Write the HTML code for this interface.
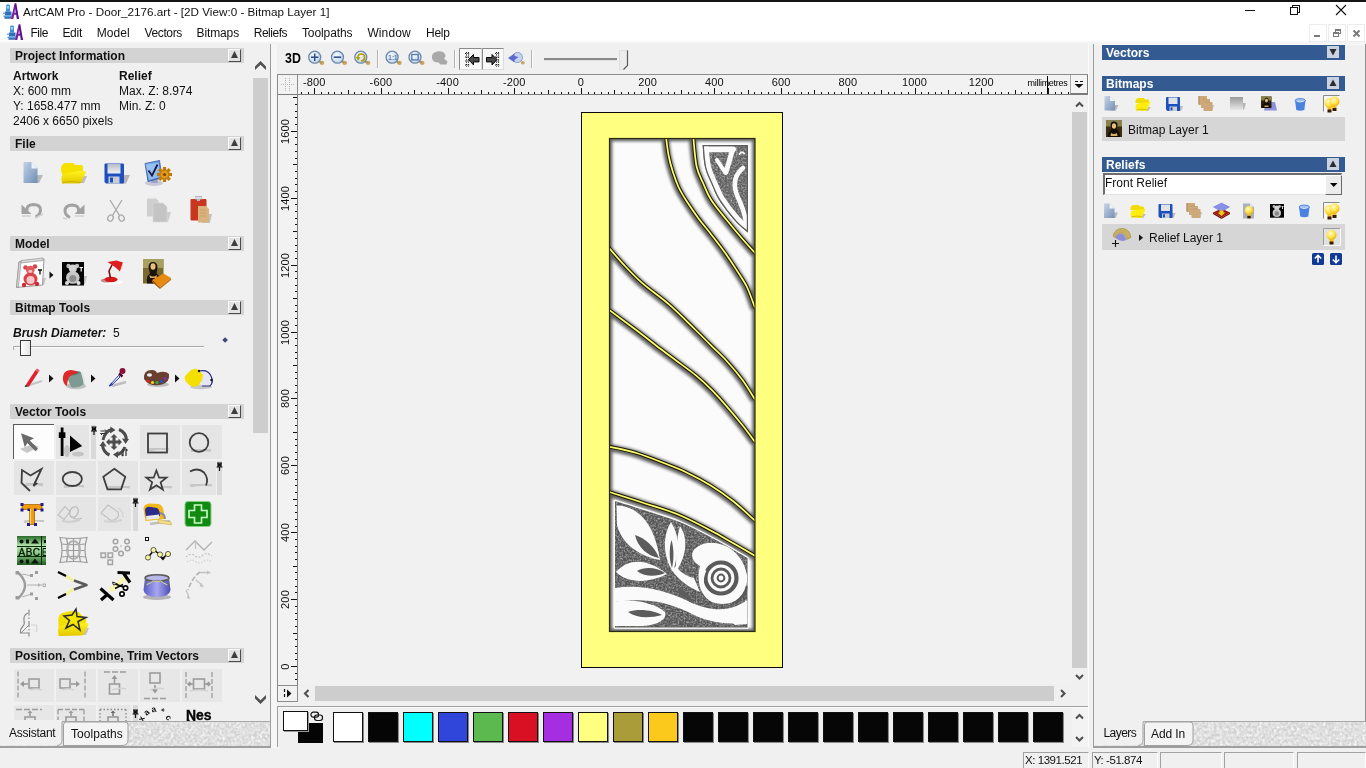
<!DOCTYPE html>
<html>
<head>
<meta charset="utf-8">
<title>ArtCAM Pro</title>
<style>
*{box-sizing:border-box;margin:0;padding:0}
html,body{width:1366px;height:768px;overflow:hidden;background:#f0f0f0}
body{font-family:"Liberation Sans",sans-serif;font-size:12px;color:#000;position:relative}
.abs{position:absolute}
#app{position:absolute;left:0;top:0;width:1366px;height:768px;overflow:hidden;background:#f0f0f0;will-change:transform}
.t{position:absolute;white-space:nowrap;line-height:14px;font-size:12px;color:#111}
.b{font-weight:bold}
#topblack{left:0;top:0;width:1366px;height:2px;background:#151515}
#titlebar{left:0;top:2px;width:1366px;height:20px;background:#fff}
#menubar{left:0;top:22px;width:1366px;height:19px;background:#fff}
#menugrad{left:0;top:41px;width:1366px;height:3px;background:linear-gradient(#fbfbfb,#f0f0f0)}
.mi{position:absolute;top:26px;font-size:12px;line-height:14px;white-space:nowrap;color:#111}
#lp{left:0;top:0;width:270px;height:721px;background:#f0f0f0;overflow:hidden}
.hdr{position:absolute;left:10px;width:234px;height:15px;background:#d3d3d3}
.hdr span{position:absolute;left:5px;top:1px;line-height:15px;font-weight:bold;font-size:12px;white-space:nowrap;color:#111}
.hbtn{position:absolute;left:218px;top:1px;width:13px;height:13px;background:#e2e2e2;border-right:1px solid #4a4a4a;border-bottom:1px solid #4a4a4a;border-left:1px solid #fafafa;border-top:1px solid #fafafa}
.cell{position:absolute;width:40px;height:34px;background:#e5e5e5}
.rh{position:absolute;left:1102px;width:243px;height:15px;background:#335b91}
.rh span{position:absolute;left:4px;top:1px;line-height:15px;font-weight:bold;font-size:12px;color:#fff;white-space:nowrap}
.rbtn{position:absolute;left:225px;top:1px;width:12px;height:12px;background:#c9d2de}
.lrow{position:absolute;left:1102px;width:243px;background:#d6d6d6}
</style>
</head>
<body>
<div id="app">

<div class="abs" id="lp">
<div class="hdr" style="top:48px"><span>Project Information</span><div class="hbtn"><svg class="abs" style="left:0;top:0" width="11" height="11" viewBox="0 0 11 11"><path d="M5.500 1 L9 8 H2z" fill="#3c3c3c"/></svg></div></div>
<div class="hdr" style="top:136px"><span>File</span><div class="hbtn"><svg class="abs" style="left:0;top:0" width="11" height="11" viewBox="0 0 11 11"><path d="M5.500 1 L9 8 H2z" fill="#3c3c3c"/></svg></div></div>
<div class="hdr" style="top:236px"><span>Model</span><div class="hbtn"><svg class="abs" style="left:0;top:0" width="11" height="11" viewBox="0 0 11 11"><path d="M5.500 1 L9 8 H2z" fill="#3c3c3c"/></svg></div></div>
<div class="hdr" style="top:300px"><span>Bitmap Tools</span><div class="hbtn"><svg class="abs" style="left:0;top:0" width="11" height="11" viewBox="0 0 11 11"><path d="M5.500 1 L9 8 H2z" fill="#3c3c3c"/></svg></div></div>
<div class="hdr" style="top:404px"><span>Vector Tools</span><div class="hbtn"><svg class="abs" style="left:0;top:0" width="11" height="11" viewBox="0 0 11 11"><path d="M5.500 1 L9 8 H2z" fill="#3c3c3c"/></svg></div></div>
<div class="hdr" style="top:648px"><span>Position, Combine, Trim Vectors</span><div class="hbtn"><svg class="abs" style="left:0;top:0" width="11" height="11" viewBox="0 0 11 11"><path d="M5.500 1 L9 8 H2z" fill="#3c3c3c"/></svg></div></div>
<div class="t b" style="left:13px;top:69px;">Artwork</div>
<div class="t b" style="left:119px;top:69px;">Relief</div>
<div class="t " style="left:13px;top:84px;">X: 600 mm</div>
<div class="t " style="left:119px;top:84px;">Max. Z: 8.974</div>
<div class="t " style="left:13px;top:99px;">Y: 1658.477 mm</div>
<div class="t " style="left:119px;top:99px;">Min. Z: 0</div>
<div class="t " style="left:13px;top:114px;">2406 x 6650 pixels</div>
<div class="t b" style="left:13px;top:326px;font-style:italic">Brush Diameter:</div>
<div class="t " style="left:113px;top:326px;">5</div>
<div class="abs" style="left:14px;top:346px;width:190px;height:1px;background:#a8a8a8"></div>
<div class="abs" style="left:14px;top:347px;width:190px;height:1px;background:#fdfdfd"></div>
<div class="abs" style="left:13px;top:346px;width:1px;height:4px;background:#b4b4b4"></div>
<div class="abs" style="left:20px;top:340px;width:10.500px;height:16px;background:linear-gradient(90deg,#fff,#e6e6e6);border:1px solid #3a3a3a"></div>
<div class="abs" style="left:222.500px;top:337.500px;width:4.200px;height:4.200px;background:#3d4d70;transform:rotate(45deg)"></div>
<div class="abs" style="left:13px;top:424px;width:41px;height:35px;background:#fdfdfd;border-left:1px solid #5a5a5a;border-top:1px solid #5a5a5a"></div>
<div class="cell" style="left:56px;top:425px;width:33px;height:34px;background:#e5e5e5"></div>
<div class="cell" style="left:91px;top:425px;width:5px;height:34px;background:#d9d9d9"></div>
<div class="cell" style="left:140px;top:425px;width:40px;height:34px;background:#e5e5e5"></div>
<div class="cell" style="left:182px;top:425px;width:40px;height:34px;background:#e5e5e5"></div>
<div class="cell" style="left:14px;top:461px;width:40px;height:34px;background:#e5e5e5"></div>
<div class="cell" style="left:56px;top:461px;width:40px;height:34px;background:#e5e5e5"></div>
<div class="cell" style="left:98px;top:461px;width:40px;height:34px;background:#e5e5e5"></div>
<div class="cell" style="left:140px;top:461px;width:40px;height:34px;background:#e5e5e5"></div>
<div class="cell" style="left:182px;top:461px;width:34px;height:34px;background:#e5e5e5"></div>
<div class="cell" style="left:217px;top:461px;width:5px;height:34px;background:#d9d9d9"></div>
<div class="cell" style="left:56px;top:497px;width:40px;height:34px;background:#e5e5e5"></div>
<div class="cell" style="left:98px;top:497px;width:33px;height:34px;background:#e5e5e5"></div>
<div class="cell" style="left:133px;top:497px;width:5px;height:34px;background:#d9d9d9"></div>
<div class="cell" style="left:14px;top:669px;width:40px;height:33px;background:#e7e7e7"></div>
<div class="cell" style="left:56px;top:669px;width:40px;height:33px;background:#e7e7e7"></div>
<div class="cell" style="left:98px;top:669px;width:40px;height:33px;background:#e7e7e7"></div>
<div class="cell" style="left:140px;top:669px;width:40px;height:33px;background:#e7e7e7"></div>
<div class="cell" style="left:182px;top:669px;width:40px;height:33px;background:#e7e7e7"></div>
<div class="cell" style="left:14px;top:705px;width:40px;height:20px;background:#e7e7e7"></div>
<div class="cell" style="left:56px;top:705px;width:40px;height:20px;background:#e7e7e7"></div>
<div class="cell" style="left:98px;top:705px;width:33px;height:20px;background:#e7e7e7"></div>
<div class="cell" style="left:133px;top:705px;width:5px;height:20px;background:#d9d9d9"></div>
<div class="abs" style="left:253px;top:78px;width:15px;height:355px;background:#cdcdcd"></div>
<svg class="abs" style="left:253px;top:58px" width="15" height="15" viewBox="253 58 15 15"><path d="M260.500 61 L266 66.500 V70 L260.500 64.800 L255 70 V66.500Z" fill="#505050"/></svg>
<svg class="abs" style="left:253px;top:692px" width="15" height="15" viewBox="253 692 15 15"><path d="M260.500 704 L266 698.500 V695 L260.500 700.200 L255 695 V698.500Z" fill="#505050"/></svg>
<div class="abs" style="left:0;top:43px;width:270px;height:1px;background:#fafafa"></div>
<svg class="abs" style="left:0;top:0" width="270" height="721" viewBox="0 0 270 721"><defs><linearGradient id="gabc" x1="0" y1="0" x2="0" y2="1"><stop offset="0" stop-color="#2a6a2a"/><stop offset=".35" stop-color="#b8e8b0"/><stop offset=".65" stop-color="#7fc07a"/><stop offset="1" stop-color="#1f5a1f"/></linearGradient>
<linearGradient id="gcup" x1="0" y1="0" x2="1" y2="0"><stop offset="0" stop-color="#5a5ac8"/><stop offset=".5" stop-color="#a8a8f0"/><stop offset="1" stop-color="#4a4ab8"/></linearGradient></defs><defs>
<linearGradient id="gdoc" x1="0" y1="0" x2="1" y2="1"><stop offset="0" stop-color="#c4d2e6"/><stop offset="1" stop-color="#6f8db5"/></linearGradient>
<linearGradient id="gfold" x1="0" y1="0" x2="0" y2="1"><stop offset="0" stop-color="#fff21a"/><stop offset="1" stop-color="#e3c800"/></linearGradient>
<linearGradient id="gmon" x1="0" y1="0" x2="1" y2="1"><stop offset="0" stop-color="#8fc0f5"/><stop offset="1" stop-color="#3060c8"/></linearGradient>
<linearGradient id="gmetal" x1="0" y1="0" x2="0" y2="1"><stop offset="0" stop-color="#b8bcc4"/><stop offset="1" stop-color="#f0f2f5"/></linearGradient>
<filter id="blur1"><feGaussianBlur stdDeviation="0.6"/></filter>
<filter id="blur2"><feGaussianBlur stdDeviation="1.2"/></filter>
</defs>


<path d="M37 175 h6 l-4 8 h-8z" fill="#b9b9b9" filter="url(#blur1)"/>
<path d="M23.500 162 h8 l6 6.500 v14.500 h-14z" fill="url(#gdoc)"/>
<path d="M31.500 162 v6.500 h6z" fill="#eef3fa"/>

<path d="M80 176 h7 l-3 7 h-10z" fill="#bdbdbd" filter="url(#blur1)"/>
<path d="M61 171 q-1-6 4-8 h8 l2.500 2 h6 q1.500 0 1.500 2 v4 h-4 l-16 5z" fill="#f5e100"/>
<path d="M62 183.500 q-1.500-8 1-9 q10-4 22-3.500 q1.500 0.500 .5 2 l-4.500 9.500 q-.5 1-2 1z" fill="url(#gfold)"/>
<path d="M62.500 183 q6-2.500 18.500-.5" stroke="#c9ae00" stroke-width="1" fill="none"/>

<path d="M122 175 h8 l-4 8.500 h-6z" fill="#b5b5b5" filter="url(#blur1)"/>
<path d="M104.500 164.500 q0-1 1-1 h17.500 q1 0 1 1 v18 q0 1-1 1 h-17 l-1.500-1.500z" fill="#1d50be"/>
<rect x="107.500" y="164" width="13" height="9.500" fill="url(#gmetal)"/>
<rect x="108.500" y="176.500" width="11" height="7" fill="#c9ced6"/>
<rect x="110" y="177.500" width="3" height="5" fill="#1d50be"/>

<ellipse cx="154" cy="183" rx="9" ry="3" fill="#c8c8d8"/>
<path d="M152 178 h5 l1 5 h-7z" fill="#9aa4c8"/>
<path d="M145 163.500 l14.500-3 l2.500 17.500 l-14 3.500z" fill="url(#gmon)" stroke="#3b5aa8" stroke-width=".8"/>
<path d="M146.500 165 l12-2.500 l2 14.500 l-11.500 3z" fill="#a8d0f8" opacity=".7"/>
<path d="M148.500 170.500 l3.500 5 l5.500-11" stroke="#1a1a40" stroke-width="1.700" fill="none"/>
<g transform="translate(164.500,174.500)">
<circle r="5.200" fill="#d08a10"/>
<g fill="#c07a08"><rect x="-1.600" y="-7.500" width="3.200" height="15"/><rect x="-7.500" y="-1.600" width="15" height="3.200"/><rect x="-1.600" y="-7.500" width="3.200" height="15" transform="rotate(45)"/><rect x="-1.600" y="-7.500" width="3.200" height="15" transform="rotate(-45)"/></g>
<circle r="3.800" fill="#e09a18"/><circle r="1.600" fill="#7a4a00"/>
</g>


<g fill="none" stroke="#a2a2a2" stroke-width="3" stroke-linecap="butt">
<path d="M27 211 q-1-6 6-6.500 q8 0 7.500 6 q-.5 4.500-5 6.500"/>
<path d="M70 217.500 q-5-2.500-5-6.500 q0-6 7.500-6 q7 .5 6 6.500"/>
</g>
<path d="M21.500 204.500 v9.500 h10z" fill="#a2a2a2"/>
<path d="M84.500 204.500 v9.500 h-10z" fill="#a2a2a2"/>
<path d="M22 216 h9 M35 218 l8-4 M75 216 h9 M63 218 l4 1" stroke="#cfcfcf" stroke-width="1.500"/>

<g fill="none" stroke="#a8a8a8" stroke-width="1.300">
<path d="M110 200 l9.500 15.500 M122 200 l-9.500 15.500"/>
<ellipse cx="110.500" cy="218" rx="2.600" ry="3.200" transform="rotate(30 110.500 218)"/>
<ellipse cx="121.500" cy="218" rx="2.600" ry="3.200" transform="rotate(-30 121.500 218)"/>
</g>

<path d="M165 212 h6 l-3 10 h-8z" fill="#cdcdcd" filter="url(#blur1)"/>
<path d="M147 198.500 h9 l3 3 v15 h-12z" fill="#cfcfcf"/>
<path d="M153 203 h10 l4 4 v15 h-14z" fill="#c4c4c4" stroke="#dadada" stroke-width=".6"/>

<path d="M206 214 h6 l-2 9 h-8z" fill="#c2c2c2" filter="url(#blur1)"/>
<rect x="190.500" y="199" width="16" height="21.500" rx="1" fill="#c8361f"/>
<path d="M195 196 h7 v3.500 h-2 v1.500 h-3 v-1.500 h-2z" fill="#b4b8c0"/>
<rect x="195.500" y="197" width="6" height="2" fill="#d8dce4"/>
<path d="M198 206 h8 l3 3 v13.500 h-11z" fill="#d9b27e"/>
<path d="M200 210 h6 M200 213 h6 M200 216 h6" stroke="#c09a62" stroke-width=".8"/>


<path d="M39 278 h7 l-2 7 h-8z" fill="#c8c8c8" filter="url(#blur1)"/>
<path d="M19 262 l25-3 l-1.500 26 l-26 2.500z" fill="#fff" stroke="#9a9a9a" stroke-width="1"/>
<path d="M21 260.500 l22-2.500 l.3 2.500 l-22 2.500z" fill="#d8d8d8" stroke="#8a8a8a" stroke-width=".6"/>
<path d="M16.500 287 l2.500-25 l2 .2 l-2.500 25z" fill="#d8d8d8" stroke="#8a8a8a" stroke-width=".6"/>
<circle cx="25.500" cy="267.500" r="2.300" fill="#d8444a"/><circle cx="35" cy="266.500" r="2.300" fill="#d8444a"/>
<circle cx="30.300" cy="270" r="4.300" fill="#e05a5e"/>
<ellipse cx="30.500" cy="279" rx="7" ry="6.500" fill="#d8444a"/>
<ellipse cx="30.500" cy="280" rx="4" ry="4" fill="#f8c8c8"/>
<ellipse cx="30.300" cy="271.500" rx="2" ry="1.400" fill="#f8c8c8"/>
<circle cx="24" cy="285" r="2.200" fill="#c83038"/><circle cx="37" cy="284" r="2.200" fill="#c83038"/>
<path d="M38 270 h4 M40 270 v4.500" stroke="#111" stroke-width="1.300"/>
<path d="M49.500 271.500 v7 l4-3.500z" fill="#111"/>

<path d="M82 276 h5 l-2 8 h-5z" fill="#c0c0c0" filter="url(#blur1)"/>
<rect x="62" y="262" width="22" height="23.500" fill="#050505"/>
<circle cx="68.500" cy="266" r="2.200" fill="#bdbdbd"/><circle cx="77" cy="266" r="2.200" fill="#bdbdbd"/>
<circle cx="72.800" cy="268.500" r="4" fill="#d2d2d2"/>
<ellipse cx="72.800" cy="277.500" rx="6.800" ry="6.300" fill="#c8c8c8"/>
<ellipse cx="72.800" cy="278.500" rx="3.600" ry="3.600" fill="#8c8c8c"/>
<circle cx="67" cy="283" r="2" fill="#e0e0e0"/><circle cx="78.500" cy="283" r="2" fill="#e0e0e0"/>
<path d="M79.500 267.500 h3.500 M81.200 267.500 v4" stroke="#fff" stroke-width="1.200"/>

<ellipse cx="112" cy="282" rx="11" ry="2.600" fill="#fff" opacity=".9" filter="url(#blur1)"/>
<ellipse cx="106" cy="280.500" rx="5" ry="2" fill="#8a2020" opacity=".5" filter="url(#blur1)"/>
<ellipse cx="111" cy="279.500" rx="6.500" ry="2.800" fill="#d81818"/>
<path d="M110.500 278 l-1.500-7 l3-6" stroke="#7a1010" stroke-width="1.600" fill="none"/>
<path d="M107.500 262 l9-1.500 l6.500 2 l-3 9 q-5-5-12.500-9.500z" fill="#e01c1c"/>
<path d="M120 271.500 l3-9 q1.500 5.500-3 9z" fill="#f8e0d0"/>

<rect x="143" y="259" width="20.500" height="24.500" fill="#7a6a30"/>
<rect x="143" y="259" width="20.500" height="9" fill="#a8a060"/>
<path d="M147 283.500 q-1-8 3-10 l-1.500-6 q0-5.500 4.500-5.500 q4.500 0 4.500 5.500 l-1 6 q4 2 4 10z" fill="#1c1408"/>
<ellipse cx="153" cy="266.500" rx="2.500" ry="3.300" fill="#e8c080"/>
<path d="M149.500 275 q3.500 3 7.500 0 l-.5 3 h-6.500z" fill="#d8a868"/>
<path d="M152 280 l11.500-6.500 l7.500 4.500 l-11 9z" fill="#e88a10"/>
<path d="M152 280 l8 7 v2 l-8-7z" fill="#a85a08"/>
<path d="M160 287 l11-9 v2 l-11 9z" fill="#c87010"/>


<path d="M25 386.500 l17-5.500" stroke="#c4c4c4" stroke-width="2.200" filter="url(#blur1)"/>
<path d="M26 384.500 l9.500-14.500 l3 2 l-9.500 14.500z" fill="#e0202c"/>
<path d="M35.500 370 l1.500-1.500 l2.500 1.800 l-.5 1.700z" fill="#f05060"/>
<path d="M26 384.500 l-1.500 2.500 l4.500-.5z" fill="#503020"/>
<path d="M49 374.500 v8 l4.500-4z" fill="#111"/>

<ellipse cx="76" cy="386" rx="10" ry="3.200" fill="#c0c0c0" filter="url(#blur1)"/>
<path d="M66 375 l15-3 l3 12 q-7 5-13 3z" fill="#7f9a92"/>
<path d="M66 375 q7-6 15-3 q-6 5-15 3z" fill="#5a7a74"/>
<path d="M63 380 q-1-9 7-10 q6 0 8 3 q-6 1-9 4 q-2 4-2 9 q-3-1-4-6z" fill="#e02828"/>
<path d="M81 372 q4 4 3 12" stroke="#d8e4e0" stroke-width="1" fill="none"/>
<path d="M91 374.500 v8 l4.500-4z" fill="#111"/>

<path d="M112 386 l14-4" stroke="#bdbdbd" stroke-width="2.400" filter="url(#blur1)"/>
<circle cx="122.500" cy="371" r="3" fill="#8a1038"/>
<path d="M119 373.500 l3.500 3" stroke="#50082a" stroke-width="2.400"/>
<path d="M118.500 375.500 l-7.500 8.500 l-1.500 2 l2.500-1 l8-8z" fill="#dfe6ff" stroke="#2030a0" stroke-width=".9"/>
<path d="M112 383 l-2.500 3" stroke="#2030c0" stroke-width="1.400"/>

<ellipse cx="158" cy="384.500" rx="11" ry="2.500" fill="#bdbdbd" filter="url(#blur1)"/>
<path d="M144 379 q-1-9 8-9 q4 0 5 3 q8-3 12 1 q1 8-7 10.500 q-12 3-18-5.500z" fill="#6a4030"/>
<ellipse cx="149.500" cy="375" rx="2.600" ry="1.800" fill="#f0f0f0"/>
<circle cx="148" cy="381" r="1.600" fill="#e02020"/><circle cx="152.500" cy="382.500" r="1.600" fill="#f0d020"/><circle cx="157" cy="382.500" r="1.600" fill="#30b040"/><circle cx="161.500" cy="381.500" r="1.600" fill="#2050e0"/><circle cx="165" cy="378.500" r="1.500" fill="#8030c0"/>
<path d="M175 374.500 v8 l4.500-4z" fill="#111"/>

<ellipse cx="201" cy="387" rx="11" ry="2.200" fill="#c6c6c6" filter="url(#blur1)"/>
<path d="M199 371 q9-2 12 5 q3 6-1 10 h-8" fill="#e6e6f2" stroke="#2a2a80" stroke-width="1.200"/>
<path d="M187 374 l4-4 l5-1.500 l4 3 l3 3.500 l-1 5 l-3 5 l-5 2 l-5-2 l-3.500-4 l-1-4z" fill="#f4e000"/>
<circle cx="199" cy="371" r="1.200" fill="#111"/><circle cx="211.500" cy="380" r="1.200" fill="#111"/>


<path d="M20 449 l13-5 l6 3 l-12 6z" fill="#c8c8c8" filter="url(#blur1)"/>
<path d="M21 433.300 l13 5 l-4.200 2.300 l8.200 8.200 l-2.400 2.400 l-8.200-8.200 l-2.600 4.300z" fill="#6a6a6a"/>

<ellipse cx="67" cy="451" rx="3" ry="6" fill="#c4c4c4" filter="url(#blur1)"/>
<ellipse cx="78" cy="454" rx="6" ry="2.500" fill="#c4c4c4" filter="url(#blur1)"/>
<rect x="60.700" y="427.500" width="2.800" height="28.500" fill="#050505"/>
<rect x="58.800" y="432.300" width="6.600" height="5.700" fill="#050505"/>
<path d="M70 435.500 V452 L82.200 446z" fill="#050505"/>

<g id="pin"><path d="M91.500 427 h5 M92.500 427.500 v3 M95.500 427.500 v3 M91 431 h6 M94 431 v4" stroke="#111" stroke-width="1.200" fill="none"/><rect x="92.500" y="427.500" width="3" height="3" fill="#111"/></g>

<g stroke="#4c4c4c" fill="none" stroke-width="3">
<path d="M103 440 q2-9 9-10.500"/><path d="M119 429.500 q7 3 7.500 10.500"/><path d="M125 447 q-3 7-9 8"/><path d="M109.500 455 q-6-2.500-7-9.500"/>
</g>
<g fill="#4c4c4c">
<path d="M110.500 426.500 l5 3.500 l-5.500 3.500z"/><path d="M129 439 l-3.500 5 l-3.500-5.500z"/><path d="M118 458 l-5-3.500 l5.500-3.500z"/><path d="M99.500 446 l3.500-5 l3.500 5.500z"/>
<path d="M114 434 l3.500 3.500 h-2 v3 h3 v-2 l3.500 3.500 l-3.500 3.500 v-2 h-3 v3 h2 l-3.500 3.500 l-3.500-3.500 h2 v-3 h-3 v2 l-3.500-3.500 l3.500-3.500 v2 h3 v-3 h-2z"/>
</g>
<path d="M100.500 431 h6 m-1.500-1.500 l1.500 1.500 M106.500 433.500 h-6 m1.500 1.500 l-1.500-1.500" stroke="#333" stroke-width="1" fill="none"/>
<path d="M123 449 v7 m-1.500-1.500 l1.500 1.500 M126 456 v-7 m1.500 1.500 l-1.500-1.500" stroke="#333" stroke-width="1.200" fill="none"/>

<path d="M149 450 q9-3 20-1" stroke="#c6c6c6" stroke-width="3" fill="none" filter="url(#blur1)"/>
<rect x="148" y="433.500" width="19" height="19" fill="none" stroke="#3e3e3e" stroke-width="1.800"/>

<path d="M191 451.500 q9-3 20-1" stroke="#c6c6c6" stroke-width="3" fill="none" filter="url(#blur1)"/>
<circle cx="199" cy="442.500" r="9.300" fill="none" stroke="#3e3e3e" stroke-width="1.800"/>


<path d="M23 486 q9-4 20-1" stroke="#c6c6c6" stroke-width="3" fill="none" filter="url(#blur1)"/>
<path d="M30 491 l-8.500-8 l.5-13 l8.500 5.500 l11-6.500 l-8 17" fill="none" stroke="#3e3e3e" stroke-width="1.800"/>
<path d="M33.500 487 l1-5.500 l3.500 2z" fill="#3e3e3e"/>

<path d="M64 487 q9-3 20-1" stroke="#c6c6c6" stroke-width="3" fill="none" filter="url(#blur1)"/>
<ellipse cx="72.300" cy="479" rx="9.600" ry="7" fill="none" stroke="#3e3e3e" stroke-width="1.800"/>

<path d="M108 488 q9-3 22-1" stroke="#c6c6c6" stroke-width="3" fill="none" filter="url(#blur1)"/>
<path d="M114.300 468.800 l11 8 l-4.200 12.500 h-13.600 l-4.200-12.500z" fill="none" stroke="#3e3e3e" stroke-width="1.800"/>

<path d="M150 488 q9-3 22-1" stroke="#c6c6c6" stroke-width="3" fill="none" filter="url(#blur1)"/>
<path d="M156.400 470.500 l2.700 7.200 h7.400 l-5.900 4.600 l2.300 7.400 l-6.500-4.500 l-6.500 4.500 l2.300-7.400 l-5.900-4.600 h7.400z" fill="none" stroke="#3e3e3e" stroke-width="1.700"/>

<path d="M190 486 q9-3 22-1" stroke="#c6c6c6" stroke-width="3" fill="none" filter="url(#blur1)"/>
<path d="M190 471.500 q8-4.500 14 1 q5 6 2 13" fill="none" stroke="#3e3e3e" stroke-width="1.800"/>
<use href="#pin" x="125.500" y="36"/>


<path d="M24 522 q9-3 20-1" stroke="#c6c6c6" stroke-width="2.500" fill="none" filter="url(#blur1)"/>
<path d="M22 504.500 h20 v5 h-7.500 v15 h-5 v-15 h-7.500z" fill="#f09a10" stroke="#b06a00" stroke-width=".8"/>
<path d="M30.500 509 v15" stroke="#ffd070" stroke-width="1.200"/>
<g fill="#1c1c90"><rect x="20.500" y="503" width="3" height="3"/><rect x="40.500" y="503" width="3" height="3"/><rect x="20.500" y="508.500" width="3" height="3"/><rect x="40.500" y="508.500" width="3" height="3"/><rect x="27" y="523" width="3" height="3"/><rect x="34" y="523" width="3" height="3"/><rect x="27.500" y="508.500" width="2.500" height="2.500"/><rect x="34" y="508.500" width="2.500" height="2.500"/></g>

<g stroke="#bebebe" fill="none" stroke-width="1.100">
<path d="M58 515 l7-8.500 l5 5 l-6 8z"/><ellipse cx="74" cy="512" rx="4" ry="5.500" transform="rotate(25 74 512)" stroke="#b6b6b6"/><path d="M70 516 q6 5 12 2"/><path d="M62 521 q8 2 18-1" stroke="#cfcfcf" stroke-width="2"/>
<path d="M101 513 l7-8 l10 7 q2 6-4 8 q-5 1-6-2z"/><path d="M118 508 q6 4 5 10" stroke="#d2d2d2"/><path d="M104 521 q8 2 18-1" stroke="#d2d2d2" stroke-width="2"/>
</g>
<use href="#pin" x="41.500" y="72"/>

<path d="M150 524 l20-3" stroke="#c0c0c0" stroke-width="2.500" filter="url(#blur1)"/>
<path d="M143.500 509 q0-5 6-5.500 l9 .5 q4 1 5 6 l1 9 l-19 2z" fill="#f0b818"/>
<path d="M145 510 q1-4 6-3 l6 1 q3 2 3 8 l-14 2z" fill="#2c2c88"/>
<path d="M146 516 l13-1.500 l.5 4 l-13 1.500z" fill="#e8e8f0"/>
<path d="M160 513 q5 1 5 6" stroke="#8a8a9a" stroke-width="2" fill="none"/>
<path d="M158 519.500 l13 2.500 l.5 3 l-13-2z" fill="#f4e088" stroke="#b8a040" stroke-width=".5"/>

<rect x="185" y="501.500" width="26" height="25" rx="3" fill="#128a12" stroke="#7fd07f" stroke-width="1"/>
<path d="M194.500 505 h7 v5.500 h5.500 v7 h-5.500 v5.500 h-7 v-5.500 h-5.500 v-7 h5.500z" fill="none" stroke="#c8ffc8" stroke-width="1.600"/>


<rect x="17" y="536" width="29" height="29" fill="#3c8a3c"/>
<rect x="17" y="536" width="29" height="29" fill="url(#gabc)"/>
<path d="M17 546.500 h29 M17 556.500 h29 M41.500 536 v29" stroke="#0a2a0a" stroke-width="1"/>
<g fill="#0a1a0a"><circle cx="21.500" cy="541.500" r="2"/><rect x="26" y="539.500" width="3" height="4"/><path d="M31 543.500 l4-5 l4 5z"/><circle cx="21.500" cy="561.500" r="2"/><rect x="26" y="559.500" width="3" height="4"/><path d="M31 563.500 l4-5 l4 5z"/><path d="M44 540 h2 v3 h-2z"/></g>
<text x="18.500" y="555.500" font-family="Liberation Sans, sans-serif" font-size="10" fill="#06140a" stroke="#06140a" stroke-width=".3" textLength="21.500">ABC</text>
<path d="M43 548.500 v7 M43 548.500 h3 M43 552 h3 M43 555.500 h3" stroke="#0a1a0a" stroke-width="1" fill="none"/>

<g stroke="#9a9a9a" fill="none" stroke-width="1.200">
<path d="M60 537.500 q13 2 27 0 q-4 12 0 25 q-14-2-27 0 q4-13 0-25z"/>
<path d="M61.500 544 q12 1.500 24 0 M62.500 550.500 h22 M61.500 557 q12-1.500 24 0"/>
<path d="M66.500 538 q3 12 0 24 M73.500 538.500 v23.500 M80.500 538 q-3 12 0 24"/>
<ellipse cx="73.500" cy="550" rx="6.500" ry="9" stroke="#b0b0b0" stroke-width="2"/>
</g>

<g stroke="#a4a4a4" fill="none" stroke-width="1.500">
<rect x="101" y="553" width="4.500" height="4.500"/><rect x="108" y="553" width="4.500" height="4.500"/><rect x="108" y="560" width="4.500" height="4.500"/>
<circle cx="115.500" cy="541.500" r="2.300"/><circle cx="127" cy="541.500" r="2.300"/><circle cx="115.500" cy="549" r="2.300"/><circle cx="127.500" cy="548.500" r="2.300"/><circle cx="121" cy="553.500" r="2.300"/>
</g>
<circle cx="121" cy="546" r=".8" fill="#a4a4a4"/>

<rect x="145.500" y="537.500" width="3" height="3" fill="#fff" stroke="#111" stroke-width="1"/>
<path d="M148 557.500 l6-7.500 l5.500 4.500 l3 4 l5-4.500" stroke="#111" stroke-width="1.600" fill="none"/>
<g fill="#f4f49a" stroke="#222" stroke-width=".7"><circle cx="148" cy="557.500" r="2.600"/><circle cx="153.500" cy="550" r="2.600"/><circle cx="160" cy="554.500" r="2.600"/><circle cx="168" cy="554" r="2.600"/></g>
<path d="M160 557 l3 3.500 l2.500-3" fill="#111"/>

<g stroke="#c4c4c4" fill="none" stroke-width="1.200">
<path d="M186 550 l9-9 l9 9 l8-8" stroke="#b2b2b2" stroke-width="1.400"/>
<path d="M195.500 543 v6"/><path d="M186 557 q5-5 9-1 q4 3 8-1 q4-3 9 1" stroke-dasharray="2 1.500"/><path d="M187 562 q5-4 9 0 q4 2 8-1 q4-2 8 1" stroke-dasharray="1.500 1.500" stroke="#d4d4d4"/>
</g>


<g stroke="#9c9c9c" fill="none" stroke-width="2.400"><path d="M18 572.500 q14 13 0 26"/></g>
<g stroke="#b2b2b2" fill="none" stroke-width="1"><path d="M22 574 l8 1.500 M22 597 l8-2.500 M27 585 h15"/></g>
<g fill="#9c9c9c"><rect x="15.500" y="571" width="3.500" height="3.500"/><rect x="15.500" y="596" width="3.500" height="3.500"/><rect x="30" y="574" width="3" height="3"/><rect x="35" y="571" width="3" height="3"/><rect x="30" y="592.500" width="3" height="3"/><rect x="35" y="597" width="3" height="3"/></g>
<rect x="43" y="584" width="2.500" height="2.500" fill="none" stroke="#9c9c9c" stroke-width=".8"/>
<path d="M38 583 l3 2 l-3 2z" fill="#b2b2b2"/>

<path d="M66 576 l8 5 M66 594 l8-5" stroke="#f4f4a8" stroke-width="3.500"/>
<path d="M58 572 l8 4 M58 598 l8-4" stroke="#050505" stroke-width="2.400"/>
<path d="M66 576 l8 5" stroke="#d8d890" stroke-width=".8" stroke-dasharray="1.500 1.500"/>
<path d="M66 594 l8-5" stroke="#d8d890" stroke-width=".8" stroke-dasharray="1.500 1.500"/>
<path d="M74 580.500 l12.500 4.500 l-12.500 4.500" stroke="#5a5a5a" stroke-width="2.600" fill="none" stroke-linejoin="round"/>

<path d="M110 591 l16-14" stroke="#f6f6b0" stroke-width="5"/>
<path d="M117.500 572.500 l12.500 .5 M123 572.500 l7 10" stroke="#050505" stroke-width="3.200" fill="none"/>
<path d="M100.500 588.500 l13 11.500 M101 600 l7.500-6.500" stroke="#050505" stroke-width="3.200" fill="none"/>
<path d="M113 583 l10 4 M115 588.500 l8-4" stroke="#050505" stroke-width="1.400" fill="none"/>
<path d="M112.500 582 l5 2 l-4 1z" fill="#fff" stroke="#050505" stroke-width=".8"/>
<circle cx="125.500" cy="588" r="2.200" fill="#fff" stroke="#050505" stroke-width="1.700"/><circle cx="122" cy="594" r="2.200" fill="#fff" stroke="#050505" stroke-width="1.700"/>

<ellipse cx="157" cy="597" rx="14" ry="3" fill="#b4b4b8" filter="url(#blur1)"/>
<path d="M145 578 q12 5 24 0 l1.500 12 q-1 7-13.500 7 q-12.500 0-13.500-7z" fill="url(#gcup)"/>
<ellipse cx="157" cy="578" rx="12" ry="3.200" fill="#b8b8e8" stroke="#5a5a5a" stroke-width="1.600"/>
<path d="M146 585 q5-2 7-4 q4 1.500 8 0 q2 2.500 7 4" stroke="#d8d89a" stroke-width="1" fill="none"/>
<path d="M146 579 v8 M168 579 v8" stroke="#6a6a6a" stroke-width="1"/>

<g stroke="#c2c2c2" fill="none" stroke-width="1.300">
<path d="M200 572 q-8 6-12 18" stroke="#b4b4b4" stroke-width="1.600" stroke-dasharray="5 2"/>
<path d="M200 572.500 h8 M196 580 l6 5 M186 590 l3 7"/>
</g>
<path d="M207 570.500 l4 2 l-4 2z M201 583 l3 4 l-4.500-.5z M188 595 l2.500 4 l-4-1z" fill="#c2c2c2"/>


<g stroke="#8e8e8e" fill="none" stroke-width="1.200">
<path d="M29 609.500 v27" stroke-dasharray="6 2 1.500 2"/>
<path d="M28 613 q-5 2-4 8 q1 3-1 5 q-3 3-2.500 7 h8.500"/>
<path d="M21 633 l8-8" stroke-width="1"/>
<path d="M31 625 h5 q2 3 0 7" stroke="#d4d4d4"/>
</g>

<path d="M80 628 h9 l-3 7 h-9z" fill="#c2c2c2" filter="url(#blur1)"/>
<path d="M58.500 622 q-1-7 4-9 l8-2 l8 1 l8 8 l-3 9 q-12 3-25 7z" fill="#f4e000"/>
<path d="M59 636 q-2-8 1-10 q12-3 27-3 q2 .5 1 2.500 l-4 8.500 q-1 1.500-3 1.500z" fill="url(#gfold)"/>
<path d="M76 609 l1 7.500 l9 1 l-8 4 l2 8.500 l-7-5.500 l-7 3.500 l3.500-7.500 l-5.500-4.500 l8-1z" fill="#f8e800" stroke="#2a2a2a" stroke-width="1.500" stroke-linejoin="miter"/>

<g stroke="#9c9c9c" fill="none" stroke-width="1.300">
<path d="M18 671.500 v28" stroke-dasharray="5 2"/><rect x="29" y="679" width="10" height="9" stroke-width="1.600"/><path d="M28 684 h-7" stroke-width="1.600"/>
<path d="M51 671.500 v28" stroke-dasharray="5 2" transform="translate(34 0)"/><rect x="60" y="679" width="10" height="9" stroke-width="1.600"/><path d="M71 684 h7" stroke-width="1.600"/>
<path d="M104 672 h22" stroke-dasharray="6 2"/><rect x="109.500" y="684" width="10" height="10" stroke-width="1.600"/><path d="M114.500 683 v-6" stroke-width="1.600"/>
<path d="M144 698.500 h22" stroke-dasharray="6 2"/><rect x="150" y="673" width="10" height="10" stroke-width="1.600"/><path d="M155 685 v6" stroke-width="1.600"/>
<path d="M186 672 v27 M212 672 v27" stroke-dasharray="5 2"/><rect x="193.500" y="679" width="11" height="10" stroke-width="1.600"/><path d="M188 684 h5 M205 684 h5"/>
<path d="M30 690 q6-2 12 0 M62 690 q6-2 12 0 M112 690 q8-3 14-1 M150 690 q8-3 14-1 M190 691 q10-2 18 0" stroke="#d4d4d4" stroke-width="1.600"/>
</g>
<g fill="#989898"><path d="M20 684 l4-3 v6z"/><path d="M80 684 l-4-3 v6z"/><path d="M114.500 675 l-3 4 h6z"/><path d="M155 693.500 l-3-4 h6z"/><path d="M189.500 681.500 l2.500 2.500 l-2.500 2.500 l-2.500-2.500z"/><path d="M208.500 681.500 l2.500 2.500 l-2.500 2.500 l-2.500-2.500z"/></g>

<g stroke="#9c9c9c" fill="none" stroke-width="1.300">
<path d="M16 709.500 h26" stroke-dasharray="6 2"/><rect x="25" y="717" width="10" height="8" stroke-width="1.600"/><path d="M30 716 v-4" stroke-width="1.600"/>
<path d="M58 709.500 h26 M58 709.500 v12 M84 709.500 v12" stroke-dasharray="5 2"/><rect x="66" y="717" width="10" height="8" stroke-width="1.600"/><path d="M71 716 v-4" stroke-width="1.600"/>
<path d="M100 709.500 h26 M100 709.500 v12 M126 709.500 v12" stroke-dasharray="1.500 2" stroke="#8a8a8a"/><rect x="108" y="717" width="10" height="8" stroke-width="1.600" stroke="#9a9a9a"/><path d="M113 716 v-4" stroke-width="1.600" stroke="#7a7a7a"/>
</g>
<path d="M30 710.500 l-2.500 2.500 h5z M71 710.500 l-2.500 2.500 h5z" fill="#9a9a9a"/><path d="M113 710.500 l-2.500 2.500 h5z" fill="#6a6a6a"/>
<use href="#pin" x="41.500" y="283"/>

<g font-family="Liberation Sans, sans-serif" font-size="8.500" font-weight="bold" fill="#111">
<text transform="translate(143 722) rotate(-65)">x</text><text transform="translate(146.500 716) rotate(-40)">a</text><text transform="translate(152 712.500) rotate(-12)">a</text><text transform="translate(160 713.500) rotate(18)">*</text><text transform="translate(165 717.500) rotate(50)">c</text>
</g>
<text x="186" y="719.800" font-family="Liberation Sans, sans-serif" font-size="14" font-weight="bold" fill="#050505" stroke="#050505" stroke-width=".4" textLength="25.500" lengthAdjust="spacingAndGlyphs">Nes</text>
<text x="186" y="729.800" font-family="Liberation Sans, sans-serif" font-size="14" font-weight="bold" fill="#050505" stroke="#050505" stroke-width=".4" textLength="25.500" lengthAdjust="spacingAndGlyphs">Nes</text>
</svg>
</div>
<svg class="abs" style="left:0;top:0" width="1366" height="768" viewBox="0 0 1366 768"><defs><filter id="tx" x="0" y="0" width="100%" height="100%"><feTurbulence type="fractalNoise" baseFrequency="0.350" numOctaves="2" seed="7"/><feColorMatrix type="matrix" values="0 0 0 0 1  0 0 0 0 1  0 0 0 0 1  1.200 1.200 0 0 -0.900"/><feComposite in2="SourceGraphic" operator="in"/></filter></defs>
<rect x="0" y="721" width="270" height="26" fill="#d2d2d2"/><rect x="0" y="721" width="270" height="26" fill="#fff" filter="url(#tx)"/>
<rect x="1094" y="721" width="272" height="26" fill="#d2d2d2"/><rect x="1094" y="721" width="272" height="26" fill="#fff" filter="url(#tx)"/>
<rect x="0" y="721" width="270" height="1" fill="#a8a8a8"/><rect x="1094" y="721" width="272" height="1" fill="#a8a8a8"/>

<path d="M0 720 H62 V740 Q62 745 57 745.500 H0Z" fill="#f0f0f0"/>
<path d="M62 722 V740 Q62 745 57 745.500" fill="none" stroke="#a4a4a4" stroke-width="1"/>
<path d="M63.500 746 V725 Q63.500 722 66.500 722 H125 Q128 722 128 725 V740 Q128 745.500 122 745.500 H63.500Z" fill="#f4f4f4" stroke="#a0a0a0" stroke-width="1"/>
<rect x="0" y="746" width="270" height="2" fill="#9e9e9e"/>

<path d="M1094 720 H1143 V740 Q1143 745 1138 745.500 H1094Z" fill="#f0f0f0"/>
<path d="M1143 722 V740 Q1143 745 1138 745.500" fill="none" stroke="#a4a4a4" stroke-width="1"/>
<path d="M1144.500 746 V725 Q1144.500 722 1147.500 722 H1190 Q1193 722 1193 725 V740 Q1193 745.500 1187 745.500 H1144.500Z" fill="#f4f4f4" stroke="#a0a0a0" stroke-width="1"/>
<rect x="1094" y="746" width="272" height="2" fill="#9e9e9e"/>
</svg>
<div class="t" style="left:9px;top:726px;letter-spacing:-0.250px">Assistant</div>
<div class="t" style="left:71px;top:727px;letter-spacing:0.050px">Toolpaths</div>
<div class="t" style="left:1103.500px;top:726px;letter-spacing:-0.550px">Layers</div>
<div class="t" style="left:1151px;top:727px;letter-spacing:-0.1px">Add In</div>

<div class="abs" style="left:270px;top:44px;width:1px;height:704px;background:#9c9c9c"></div>
<div class="abs" style="left:271px;top:44px;width:6px;height:704px;background:#f6f6f6"></div>
<div class="abs" style="left:276px;top:43px;width:812px;height:1px;background:#a6a6a6"></div>
<div class="abs" style="left:277px;top:44px;width:811px;height:30px;background:#f0f0f0"></div>
<div class="t b" style="left:284.500px;top:49px;font-size:15.500px;line-height:17px;color:#050505;transform:scaleX(.8);transform-origin:0 0">3D</div>
<svg class="abs" style="left:277px;top:44px" width="811" height="30" viewBox="277 44 811 30"><defs><radialGradient id="gz" cx=".4" cy=".35" r=".7"><stop offset="0" stop-color="#f4faff"/><stop offset="1" stop-color="#b9d4ea"/></radialGradient></defs><ellipse cx="322.0" cy="62.900" rx="2.300" ry="2.100" fill="#c9a468"/><path d="M318.9 61 l2.500 2" stroke="#b89050" stroke-width="2.200"/><circle cx="314.7" cy="57.200" r="6" fill="url(#gz)" stroke="#7088a8" stroke-width="1.300"/><path d="M311 57.200 h7.400 M314.700 53.500 v7.400" stroke="#2a4a8a" stroke-width="1.500"/><ellipse cx="344.8" cy="62.900" rx="2.300" ry="2.100" fill="#c9a468"/><path d="M341.7 61 l2.500 2" stroke="#b89050" stroke-width="2.200"/><circle cx="337.5" cy="57.200" r="6" fill="url(#gz)" stroke="#7088a8" stroke-width="1.300"/><path d="M333.800 57.200 h7.400" stroke="#2a4a8a" stroke-width="1.500"/><ellipse cx="368.1" cy="62.900" rx="2.300" ry="2.100" fill="#c9a468"/><path d="M365.0 61 l2.500 2" stroke="#b89050" stroke-width="2.200"/><circle cx="360.8" cy="57.200" r="6" fill="url(#gz)" stroke="#7088a8" stroke-width="1.300"/><path d="M358 58.500 q-.5-4.500 3.500-4.500 q3.500 .5 3 4 q-.5 3-3.500 3" stroke="#b8a000" stroke-width="1.700" fill="none"/><path d="M355.800 57 l2.300 3.800 l2.400-3.500z" fill="#b8a000"/><rect x="377" y="50" width="1" height="18" fill="#b4b4b4"/><rect x="378" y="50" width="1" height="18" fill="#fafafa"/><ellipse cx="399.4" cy="62.900" rx="2.300" ry="2.100" fill="#c9a468"/><path d="M396.3 61 l2.500 2" stroke="#b89050" stroke-width="2.200"/><circle cx="392.1" cy="57.200" r="6" fill="url(#gz)" stroke="#7088a8" stroke-width="1.300"/><text x="388.300" y="59.600" font-family="Liberation Sans, sans-serif" font-size="6.500" font-weight="bold" fill="#5a7aa8">1:1</text><ellipse cx="422.3" cy="62.900" rx="2.300" ry="2.100" fill="#c9a468"/><path d="M419.2 61 l2.500 2" stroke="#b89050" stroke-width="2.200"/><circle cx="415" cy="57.200" r="6" fill="url(#gz)" stroke="#7088a8" stroke-width="1.300"/><rect x="411.800" y="54.500" width="6.400" height="5.400" fill="none" stroke="#5a78a8" stroke-width="1.300"/><path d="M432 58 q-1-5 5-6.500 q7-1 8.500 4 q0 2-1.500 3 l3.500 3 l-1 3 h-6 l-2-2 q-6 0-6.500-4.500z" fill="#a9a9a9"/><rect x="454" y="50" width="1" height="18" fill="#b4b4b4"/><rect x="455" y="50" width="1" height="18" fill="#fafafa"/><rect x="459.500" y="48.500" width="22" height="21" fill="#f8f8f8" stroke="#dcdcdc"/><path d="M459.500 69.500 v-21 h22" stroke="#8a8a8a" fill="none"/><rect x="482.500" y="48.500" width="21" height="21" fill="#f8f8f8" stroke="#dcdcdc"/><path d="M482.500 69.500 v-21 h21" stroke="#8a8a8a" fill="none"/><g stroke="#222" stroke-width="1" stroke-dasharray="1.200 1.200"><path d="M466.500 52 v15 M468.500 52 v15 M465 53.500 h5 M465 57 h5 M465 61 h5 M465 65 h5"/></g><path d="M468.500 59.500 l5-5 v3 h5.500 v4.400 h-5.500 v3z" fill="#4a4a4a" stroke="#050505" stroke-width="1"/><g stroke="#222" stroke-width="1" stroke-dasharray="1.200 1.200"><path d="M496.500 52 v15 M498.500 52 v15 M495 53.500 h5 M495 57 h5 M495 61 h5 M495 65 h5"/></g><path d="M497 59.500 l-5-5 v3 h-5.500 v4.400 h5.500 v3z" fill="#4a4a4a" stroke="#050505" stroke-width="1"/><ellipse cx="522.800" cy="62.800" rx="2" ry="1.800" fill="#c9a468"/><circle cx="517.500" cy="57.500" r="5" fill="#c4d4f0" stroke="#8aa0c8" stroke-width="1"/><path d="M508 58 l6.500-4.500 v2.500 l4 1 l-4 3 v2.500z" fill="#5a6ad0"/><rect x="531" y="50" width="1" height="18" fill="#b4b4b4"/><rect x="532" y="50" width="1" height="18" fill="#fafafa"/><rect x="544" y="58" width="73" height="2" fill="#8a8a8a"/><rect x="544" y="60" width="73" height="1" fill="#e0e0e0"/><path d="M619.500 50.500 h8 v15 l-4 4 h-4z" fill="#ececec" stroke="#dedede" stroke-width="1"/><path d="M627.500 50.500 v15 l-4 4" fill="none" stroke="#5a5a5a" stroke-width="1.200"/></svg><div class="abs" style="left:298px;top:95px;width:773px;height:589px;background:#f1f1f1"></div>
<div class="abs" style="left:277px;top:74px;width:811px;height:21px;background:#f2f2f2;border-top:1px solid #8c8c8c;border-bottom:1px solid #7c7c7c;border-left:1px solid #8c8c8c"></div>
<div class="abs" style="left:277px;top:95px;width:21px;height:590px;background:#f2f2f2;border-left:1px solid #8c8c8c;border-right:1px solid #7c7c7c"></div>
<div class="abs" style="left:297px;top:74px;width:1px;height:21px;background:#8c8c8c"></div>
<svg class="abs" style="left:277px;top:74px" width="811" height="611" viewBox="277 74 811 611" shape-rendering="crispEdges"><g stroke="#b8b8b8" stroke-width="1" stroke-dasharray="1 1"><path d="M281 84.500 h13 M285.500 78 v13 M289.500 78 v13"/></g><rect x="301" y="92" width="1" height="2" fill="#111"/><rect x="308" y="92" width="1" height="2" fill="#111"/><rect x="314" y="88" width="1" height="6" fill="#111"/><rect x="321" y="92" width="1" height="2" fill="#111"/><rect x="328" y="92" width="1" height="2" fill="#111"/><rect x="334" y="92" width="1" height="2" fill="#111"/><rect x="341" y="92" width="1" height="2" fill="#111"/><rect x="348" y="90" width="1" height="4" fill="#111"/><rect x="354" y="92" width="1" height="2" fill="#111"/><rect x="361" y="92" width="1" height="2" fill="#111"/><rect x="368" y="92" width="1" height="2" fill="#111"/><rect x="374" y="92" width="1" height="2" fill="#111"/><rect x="381" y="88" width="1" height="6" fill="#111"/><rect x="388" y="92" width="1" height="2" fill="#111"/><rect x="394" y="92" width="1" height="2" fill="#111"/><rect x="401" y="92" width="1" height="2" fill="#111"/><rect x="408" y="92" width="1" height="2" fill="#111"/><rect x="414" y="90" width="1" height="4" fill="#111"/><rect x="421" y="92" width="1" height="2" fill="#111"/><rect x="428" y="92" width="1" height="2" fill="#111"/><rect x="434" y="92" width="1" height="2" fill="#111"/><rect x="441" y="92" width="1" height="2" fill="#111"/><rect x="448" y="88" width="1" height="6" fill="#111"/><rect x="454" y="92" width="1" height="2" fill="#111"/><rect x="461" y="92" width="1" height="2" fill="#111"/><rect x="468" y="92" width="1" height="2" fill="#111"/><rect x="474" y="92" width="1" height="2" fill="#111"/><rect x="481" y="90" width="1" height="4" fill="#111"/><rect x="488" y="92" width="1" height="2" fill="#111"/><rect x="494" y="92" width="1" height="2" fill="#111"/><rect x="501" y="92" width="1" height="2" fill="#111"/><rect x="508" y="92" width="1" height="2" fill="#111"/><rect x="514" y="88" width="1" height="6" fill="#111"/><rect x="521" y="92" width="1" height="2" fill="#111"/><rect x="528" y="92" width="1" height="2" fill="#111"/><rect x="534" y="92" width="1" height="2" fill="#111"/><rect x="541" y="92" width="1" height="2" fill="#111"/><rect x="548" y="90" width="1" height="4" fill="#111"/><rect x="554" y="92" width="1" height="2" fill="#111"/><rect x="561" y="92" width="1" height="2" fill="#111"/><rect x="568" y="92" width="1" height="2" fill="#111"/><rect x="574" y="92" width="1" height="2" fill="#111"/><rect x="581" y="88" width="1" height="6" fill="#111"/><rect x="588" y="92" width="1" height="2" fill="#111"/><rect x="594" y="92" width="1" height="2" fill="#111"/><rect x="601" y="92" width="1" height="2" fill="#111"/><rect x="608" y="92" width="1" height="2" fill="#111"/><rect x="614" y="90" width="1" height="4" fill="#111"/><rect x="621" y="92" width="1" height="2" fill="#111"/><rect x="628" y="92" width="1" height="2" fill="#111"/><rect x="634" y="92" width="1" height="2" fill="#111"/><rect x="641" y="92" width="1" height="2" fill="#111"/><rect x="648" y="88" width="1" height="6" fill="#111"/><rect x="654" y="92" width="1" height="2" fill="#111"/><rect x="661" y="92" width="1" height="2" fill="#111"/><rect x="668" y="92" width="1" height="2" fill="#111"/><rect x="674" y="92" width="1" height="2" fill="#111"/><rect x="681" y="90" width="1" height="4" fill="#111"/><rect x="688" y="92" width="1" height="2" fill="#111"/><rect x="694" y="92" width="1" height="2" fill="#111"/><rect x="701" y="92" width="1" height="2" fill="#111"/><rect x="708" y="92" width="1" height="2" fill="#111"/><rect x="714" y="88" width="1" height="6" fill="#111"/><rect x="721" y="92" width="1" height="2" fill="#111"/><rect x="728" y="92" width="1" height="2" fill="#111"/><rect x="734" y="92" width="1" height="2" fill="#111"/><rect x="741" y="92" width="1" height="2" fill="#111"/><rect x="748" y="90" width="1" height="4" fill="#111"/><rect x="754" y="92" width="1" height="2" fill="#111"/><rect x="761" y="92" width="1" height="2" fill="#111"/><rect x="768" y="92" width="1" height="2" fill="#111"/><rect x="774" y="92" width="1" height="2" fill="#111"/><rect x="781" y="88" width="1" height="6" fill="#111"/><rect x="788" y="92" width="1" height="2" fill="#111"/><rect x="794" y="92" width="1" height="2" fill="#111"/><rect x="801" y="92" width="1" height="2" fill="#111"/><rect x="808" y="92" width="1" height="2" fill="#111"/><rect x="814" y="90" width="1" height="4" fill="#111"/><rect x="821" y="92" width="1" height="2" fill="#111"/><rect x="828" y="92" width="1" height="2" fill="#111"/><rect x="834" y="92" width="1" height="2" fill="#111"/><rect x="841" y="92" width="1" height="2" fill="#111"/><rect x="848" y="88" width="1" height="6" fill="#111"/><rect x="854" y="92" width="1" height="2" fill="#111"/><rect x="861" y="92" width="1" height="2" fill="#111"/><rect x="868" y="92" width="1" height="2" fill="#111"/><rect x="874" y="92" width="1" height="2" fill="#111"/><rect x="881" y="90" width="1" height="4" fill="#111"/><rect x="888" y="92" width="1" height="2" fill="#111"/><rect x="894" y="92" width="1" height="2" fill="#111"/><rect x="901" y="92" width="1" height="2" fill="#111"/><rect x="908" y="92" width="1" height="2" fill="#111"/><rect x="915" y="88" width="1" height="6" fill="#111"/><rect x="921" y="92" width="1" height="2" fill="#111"/><rect x="928" y="92" width="1" height="2" fill="#111"/><rect x="935" y="92" width="1" height="2" fill="#111"/><rect x="941" y="92" width="1" height="2" fill="#111"/><rect x="948" y="90" width="1" height="4" fill="#111"/><rect x="955" y="92" width="1" height="2" fill="#111"/><rect x="961" y="92" width="1" height="2" fill="#111"/><rect x="968" y="92" width="1" height="2" fill="#111"/><rect x="975" y="92" width="1" height="2" fill="#111"/><rect x="981" y="88" width="1" height="6" fill="#111"/><rect x="988" y="92" width="1" height="2" fill="#111"/><rect x="995" y="92" width="1" height="2" fill="#111"/><rect x="1001" y="92" width="1" height="2" fill="#111"/><rect x="1008" y="92" width="1" height="2" fill="#111"/><rect x="1015" y="90" width="1" height="4" fill="#111"/><rect x="1021" y="92" width="1" height="2" fill="#111"/><rect x="1028" y="92" width="1" height="2" fill="#111"/><rect x="1035" y="92" width="1" height="2" fill="#111"/><rect x="1041" y="92" width="1" height="2" fill="#111"/><rect x="1048" y="88" width="1" height="6" fill="#111"/><rect x="1055" y="92" width="1" height="2" fill="#111"/><rect x="1061" y="92" width="1" height="2" fill="#111"/><rect x="1068" y="92" width="1" height="2" fill="#111"/><rect x="295" y="679" width="2" height="1" fill="#111"/><rect x="295" y="673" width="2" height="1" fill="#111"/><rect x="291" y="666" width="6" height="1" fill="#111"/><rect x="295" y="659" width="2" height="1" fill="#111"/><rect x="295" y="653" width="2" height="1" fill="#111"/><rect x="295" y="646" width="2" height="1" fill="#111"/><rect x="295" y="639" width="2" height="1" fill="#111"/><rect x="293" y="633" width="4" height="1" fill="#111"/><rect x="295" y="626" width="2" height="1" fill="#111"/><rect x="295" y="619" width="2" height="1" fill="#111"/><rect x="295" y="613" width="2" height="1" fill="#111"/><rect x="295" y="606" width="2" height="1" fill="#111"/><rect x="291" y="599" width="6" height="1" fill="#111"/><rect x="295" y="592" width="2" height="1" fill="#111"/><rect x="295" y="586" width="2" height="1" fill="#111"/><rect x="295" y="579" width="2" height="1" fill="#111"/><rect x="295" y="572" width="2" height="1" fill="#111"/><rect x="293" y="566" width="4" height="1" fill="#111"/><rect x="295" y="559" width="2" height="1" fill="#111"/><rect x="295" y="552" width="2" height="1" fill="#111"/><rect x="295" y="546" width="2" height="1" fill="#111"/><rect x="295" y="539" width="2" height="1" fill="#111"/><rect x="291" y="532" width="6" height="1" fill="#111"/><rect x="295" y="526" width="2" height="1" fill="#111"/><rect x="295" y="519" width="2" height="1" fill="#111"/><rect x="295" y="512" width="2" height="1" fill="#111"/><rect x="295" y="505" width="2" height="1" fill="#111"/><rect x="293" y="499" width="4" height="1" fill="#111"/><rect x="295" y="492" width="2" height="1" fill="#111"/><rect x="295" y="485" width="2" height="1" fill="#111"/><rect x="295" y="479" width="2" height="1" fill="#111"/><rect x="295" y="472" width="2" height="1" fill="#111"/><rect x="291" y="465" width="6" height="1" fill="#111"/><rect x="295" y="459" width="2" height="1" fill="#111"/><rect x="295" y="452" width="2" height="1" fill="#111"/><rect x="295" y="445" width="2" height="1" fill="#111"/><rect x="295" y="439" width="2" height="1" fill="#111"/><rect x="293" y="432" width="4" height="1" fill="#111"/><rect x="295" y="425" width="2" height="1" fill="#111"/><rect x="295" y="418" width="2" height="1" fill="#111"/><rect x="295" y="412" width="2" height="1" fill="#111"/><rect x="295" y="405" width="2" height="1" fill="#111"/><rect x="291" y="398" width="6" height="1" fill="#111"/><rect x="295" y="392" width="2" height="1" fill="#111"/><rect x="295" y="385" width="2" height="1" fill="#111"/><rect x="295" y="378" width="2" height="1" fill="#111"/><rect x="295" y="372" width="2" height="1" fill="#111"/><rect x="293" y="365" width="4" height="1" fill="#111"/><rect x="295" y="358" width="2" height="1" fill="#111"/><rect x="295" y="352" width="2" height="1" fill="#111"/><rect x="295" y="345" width="2" height="1" fill="#111"/><rect x="295" y="338" width="2" height="1" fill="#111"/><rect x="291" y="332" width="6" height="1" fill="#111"/><rect x="295" y="325" width="2" height="1" fill="#111"/><rect x="295" y="318" width="2" height="1" fill="#111"/><rect x="295" y="311" width="2" height="1" fill="#111"/><rect x="295" y="305" width="2" height="1" fill="#111"/><rect x="293" y="298" width="4" height="1" fill="#111"/><rect x="295" y="291" width="2" height="1" fill="#111"/><rect x="295" y="285" width="2" height="1" fill="#111"/><rect x="295" y="278" width="2" height="1" fill="#111"/><rect x="295" y="271" width="2" height="1" fill="#111"/><rect x="291" y="265" width="6" height="1" fill="#111"/><rect x="295" y="258" width="2" height="1" fill="#111"/><rect x="295" y="251" width="2" height="1" fill="#111"/><rect x="295" y="245" width="2" height="1" fill="#111"/><rect x="295" y="238" width="2" height="1" fill="#111"/><rect x="293" y="231" width="4" height="1" fill="#111"/><rect x="295" y="224" width="2" height="1" fill="#111"/><rect x="295" y="218" width="2" height="1" fill="#111"/><rect x="295" y="211" width="2" height="1" fill="#111"/><rect x="295" y="204" width="2" height="1" fill="#111"/><rect x="291" y="198" width="6" height="1" fill="#111"/><rect x="295" y="191" width="2" height="1" fill="#111"/><rect x="295" y="184" width="2" height="1" fill="#111"/><rect x="295" y="178" width="2" height="1" fill="#111"/><rect x="295" y="171" width="2" height="1" fill="#111"/><rect x="293" y="164" width="4" height="1" fill="#111"/><rect x="295" y="158" width="2" height="1" fill="#111"/><rect x="295" y="151" width="2" height="1" fill="#111"/><rect x="295" y="144" width="2" height="1" fill="#111"/><rect x="295" y="137" width="2" height="1" fill="#111"/><rect x="291" y="131" width="6" height="1" fill="#111"/><rect x="295" y="124" width="2" height="1" fill="#111"/><rect x="295" y="117" width="2" height="1" fill="#111"/><rect x="295" y="111" width="2" height="1" fill="#111"/><rect x="295" y="104" width="2" height="1" fill="#111"/><rect x="293" y="97" width="4" height="1" fill="#111"/><rect x="1047" y="76" width="1" height="18" fill="#050505"/></svg>
<div class="t" style="left:294.2px;top:76px;width:40px;text-align:center;font-size:11px;line-height:13px;letter-spacing:0.15px;color:#111">-800</div>
<div class="t" style="left:360.9px;top:76px;width:40px;text-align:center;font-size:11px;line-height:13px;letter-spacing:0.15px;color:#111">-600</div>
<div class="t" style="left:427.6px;top:76px;width:40px;text-align:center;font-size:11px;line-height:13px;letter-spacing:0.15px;color:#111">-400</div>
<div class="t" style="left:494.3px;top:76px;width:40px;text-align:center;font-size:11px;line-height:13px;letter-spacing:0.15px;color:#111">-200</div>
<div class="t" style="left:561.0px;top:76px;width:40px;text-align:center;font-size:11px;line-height:13px;letter-spacing:0.15px;color:#111">0</div>
<div class="t" style="left:627.7px;top:76px;width:40px;text-align:center;font-size:11px;line-height:13px;letter-spacing:0.15px;color:#111">200</div>
<div class="t" style="left:694.4px;top:76px;width:40px;text-align:center;font-size:11px;line-height:13px;letter-spacing:0.15px;color:#111">400</div>
<div class="t" style="left:761.1px;top:76px;width:40px;text-align:center;font-size:11px;line-height:13px;letter-spacing:0.15px;color:#111">600</div>
<div class="t" style="left:827.8px;top:76px;width:40px;text-align:center;font-size:11px;line-height:13px;letter-spacing:0.15px;color:#111">800</div>
<div class="t" style="left:894.5px;top:76px;width:40px;text-align:center;font-size:11px;line-height:13px;letter-spacing:0.15px;color:#111">1000</div>
<div class="t" style="left:961.2px;top:76px;width:40px;text-align:center;font-size:11px;line-height:13px;letter-spacing:0.15px;color:#111">1200</div>
<div class="t" style="left:265px;top:660.1px;width:40px;height:13px;text-align:center;font-size:11px;line-height:13px;letter-spacing:0.15px;color:#111;transform:rotate(-90deg)">0</div>
<div class="t" style="left:265px;top:593.2px;width:40px;height:13px;text-align:center;font-size:11px;line-height:13px;letter-spacing:0.15px;color:#111;transform:rotate(-90deg)">200</div>
<div class="t" style="left:265px;top:526.3px;width:40px;height:13px;text-align:center;font-size:11px;line-height:13px;letter-spacing:0.15px;color:#111;transform:rotate(-90deg)">400</div>
<div class="t" style="left:265px;top:459.3px;width:40px;height:13px;text-align:center;font-size:11px;line-height:13px;letter-spacing:0.15px;color:#111;transform:rotate(-90deg)">600</div>
<div class="t" style="left:265px;top:392.4px;width:40px;height:13px;text-align:center;font-size:11px;line-height:13px;letter-spacing:0.15px;color:#111;transform:rotate(-90deg)">800</div>
<div class="t" style="left:265px;top:325.5px;width:40px;height:13px;text-align:center;font-size:11px;line-height:13px;letter-spacing:0.15px;color:#111;transform:rotate(-90deg)">1000</div>
<div class="t" style="left:265px;top:258.6px;width:40px;height:13px;text-align:center;font-size:11px;line-height:13px;letter-spacing:0.15px;color:#111;transform:rotate(-90deg)">1200</div>
<div class="t" style="left:265px;top:191.7px;width:40px;height:13px;text-align:center;font-size:11px;line-height:13px;letter-spacing:0.15px;color:#111;transform:rotate(-90deg)">1400</div>
<div class="t" style="left:265px;top:124.7px;width:40px;height:13px;text-align:center;font-size:11px;line-height:13px;letter-spacing:0.15px;color:#111;transform:rotate(-90deg)">1600</div>
<div class="t" style="left:1027.500px;top:77px;font-size:9px;line-height:12px;letter-spacing:-0.270px;color:#000">millimetres</div>
<div class="abs" style="left:1070px;top:75px;width:18px;height:19px;background:#f4f4f4;border-left:1px solid #a8a8a8;border-right:1px solid #7a7a7a;border-bottom:1px solid #7a7a7a"></div>
<svg class="abs" style="left:1071px;top:75px" width="17" height="19" viewBox="1071 75 17 19"><path d="M1074.500 84 h9 l-4.500 4z" fill="#111"/><path d="M1075 81.500 h3 M1080 81.500 h3" stroke="#111" stroke-width="1"/></svg>
<div class="abs" style="left:1071px;top:95px;width:17px;height:590px;background:#f0f0f0"></div>
<div class="abs" style="left:1072px;top:112px;width:15px;height:556px;background:#cdcdcd"></div>
<svg class="abs" style="left:1072px;top:97px" width="15" height="15" viewBox="0 0 15 15"><path d="M4 9.500 L7.500 6 L11 9.500" stroke="#505050" stroke-width="2.100" fill="none"/></svg>
<svg class="abs" style="left:1072px;top:669px" width="15" height="15" viewBox="0 0 15 15"><path d="M4 6 L7.500 9.500 L11 6" stroke="#505050" stroke-width="2.100" fill="none"/></svg>
<div class="abs" style="left:277px;top:685px;width:21px;height:17px;background:#f2f2f2;border:1px solid #8c8c8c;border-top-color:#8c8c8c;border-left-color:#8c8c8c"></div>
<svg class="abs" style="left:278px;top:686px" width="19" height="15" viewBox="278 686 19 15"><path d="M287 689.500 v8 l4.500-4z" fill="#111"/><path d="M284.500 689 v3 M284.500 694 v3" stroke="#111" stroke-width="1.200"/></svg>
<div class="abs" style="left:298px;top:685px;width:790px;height:17px;background:#f0f0f0"></div>
<div class="abs" style="left:315px;top:686px;width:739px;height:15px;background:#cdcdcd"></div>
<svg class="abs" style="left:299px;top:686px" width="15" height="15" viewBox="0 0 15 15"><path d="M9.500 4 L6 7.500 L9.500 11" stroke="#505050" stroke-width="2.100" fill="none"/></svg>
<svg class="abs" style="left:1055px;top:686px" width="15" height="15" viewBox="0 0 15 15"><path d="M6 4 L9.500 7.500 L6 11" stroke="#505050" stroke-width="2.100" fill="none"/></svg>
<div class="abs" style="left:277px;top:706px;width:811px;height:41px;background:#f0f0f0;border-top:1px solid #a0a0a0;border-left:1px solid #a0a0a0"></div>
<div class="abs" style="left:278px;top:707px;width:810px;height:1px;background:#fbfbfb"></div>
<div class="abs" style="left:298px;top:723px;width:25px;height:20px;background:#050505"></div>
<div class="abs" style="left:283px;top:711px;width:25px;height:20px;background:#fff;border:1px solid #111;box-shadow:1px 1px 0 #9a9a9a"></div>
<svg class="abs" style="left:310px;top:711px" width="14" height="11" viewBox="0 0 14 11"><rect x="1" y="1.200" width="7.500" height="5" rx="2.200" fill="none" stroke="#111" stroke-width="1.200"/><rect x="4.500" y="4" width="8" height="5.500" rx="2.400" fill="none" stroke="#111" stroke-width="1.200"/></svg>
<div class="abs" style="left:333px;top:712px;width:30px;height:30px;background:#ffffff;border:1px solid #111;box-shadow:1px 1px 0 #8a8a8a"></div>
<div class="abs" style="left:368px;top:712px;width:30px;height:30px;background:#050505;border:1px solid #111;box-shadow:1px 1px 0 #8a8a8a"></div>
<div class="abs" style="left:403px;top:712px;width:30px;height:30px;background:#00ffff;border:1px solid #111;box-shadow:1px 1px 0 #8a8a8a"></div>
<div class="abs" style="left:438px;top:712px;width:30px;height:30px;background:#3045d9;border:1px solid #111;box-shadow:1px 1px 0 #8a8a8a"></div>
<div class="abs" style="left:473px;top:712px;width:30px;height:30px;background:#5bb950;border:1px solid #111;box-shadow:1px 1px 0 #8a8a8a"></div>
<div class="abs" style="left:508px;top:712px;width:30px;height:30px;background:#d91023;border:1px solid #111;box-shadow:1px 1px 0 #8a8a8a"></div>
<div class="abs" style="left:543px;top:712px;width:30px;height:30px;background:#a52ee0;border:1px solid #111;box-shadow:1px 1px 0 #8a8a8a"></div>
<div class="abs" style="left:578px;top:712px;width:30px;height:30px;background:#ffff80;border:1px solid #111;box-shadow:1px 1px 0 #8a8a8a"></div>
<div class="abs" style="left:613px;top:712px;width:30px;height:30px;background:#ab9c3a;border:1px solid #111;box-shadow:1px 1px 0 #8a8a8a"></div>
<div class="abs" style="left:648px;top:712px;width:30px;height:30px;background:#fbc91b;border:1px solid #111;box-shadow:1px 1px 0 #8a8a8a"></div>
<div class="abs" style="left:683px;top:712px;width:30px;height:30px;background:#060606;border:1px solid #111;box-shadow:1px 1px 0 #8a8a8a"></div>
<div class="abs" style="left:718px;top:712px;width:30px;height:30px;background:#060606;border:1px solid #111;box-shadow:1px 1px 0 #8a8a8a"></div>
<div class="abs" style="left:753px;top:712px;width:30px;height:30px;background:#060606;border:1px solid #111;box-shadow:1px 1px 0 #8a8a8a"></div>
<div class="abs" style="left:788px;top:712px;width:30px;height:30px;background:#060606;border:1px solid #111;box-shadow:1px 1px 0 #8a8a8a"></div>
<div class="abs" style="left:823px;top:712px;width:30px;height:30px;background:#060606;border:1px solid #111;box-shadow:1px 1px 0 #8a8a8a"></div>
<div class="abs" style="left:858px;top:712px;width:30px;height:30px;background:#060606;border:1px solid #111;box-shadow:1px 1px 0 #8a8a8a"></div>
<div class="abs" style="left:893px;top:712px;width:30px;height:30px;background:#060606;border:1px solid #111;box-shadow:1px 1px 0 #8a8a8a"></div>
<div class="abs" style="left:928px;top:712px;width:30px;height:30px;background:#060606;border:1px solid #111;box-shadow:1px 1px 0 #8a8a8a"></div>
<div class="abs" style="left:963px;top:712px;width:30px;height:30px;background:#060606;border:1px solid #111;box-shadow:1px 1px 0 #8a8a8a"></div>
<div class="abs" style="left:998px;top:712px;width:30px;height:30px;background:#060606;border:1px solid #111;box-shadow:1px 1px 0 #8a8a8a"></div>
<div class="abs" style="left:1033px;top:712px;width:30px;height:30px;background:#060606;border:1px solid #111;box-shadow:1px 1px 0 #8a8a8a"></div>
<div class="abs" style="left:1072px;top:708px;width:16px;height:39px;background:#f3f3f3"></div>
<svg class="abs" style="left:1072px;top:709px" width="15" height="15" viewBox="0 0 15 15"><path d="M4 9.500 L7.500 6 L11 9.500" stroke="#505050" stroke-width="2.100" fill="none"/></svg>
<svg class="abs" style="left:1072px;top:731px" width="15" height="15" viewBox="0 0 15 15"><path d="M4 6 L7.500 9.500 L11 6" stroke="#505050" stroke-width="2.100" fill="none"/></svg>
<div class="abs" style="left:1088px;top:44px;width:1px;height:704px;background:#fbfbfb"></div>
<div class="abs" style="left:1093px;top:44px;width:1px;height:704px;background:#9c9c9c"></div>
<svg class="abs" style="left:575px;top:106px" width="214" height="568" viewBox="575 106 214 568">
<defs>
<filter id="db1" x="-5%" y="-5%" width="110%" height="110%"><feGaussianBlur stdDeviation="1.400"/></filter>
<filter id="db2" x="-5%" y="-5%" width="110%" height="110%"><feGaussianBlur stdDeviation="0.700"/></filter>
<filter id="noise" x="0" y="0" width="100%" height="100%"><feTurbulence type="fractalNoise" baseFrequency="0.550" numOctaves="2" seed="3" result="n"/><feColorMatrix in="n" type="matrix" values="0 0 0 0 0.720  0 0 0 0 0.720  0 0 0 0 0.720  0.900 0.900 0 0 -0.740"/><feComposite in2="SourceGraphic" operator="in"/></filter>
<clipPath id="cpanel"><rect x="609.500" y="138.500" width="145.500" height="493"/></clipPath>
<clipPath id="cdb"><path d="M615.0 500.9 C620.1 502.5 635.1 507.2 645.8 510.7 C656.5 514.2 667.9 517.2 679.0 521.8 C690.1 526.3 703.0 533.2 712.2 538.0 C721.4 542.8 728.5 547.2 734.4 550.5 C740.3 553.8 745.3 556.8 747.5 558.0 L747.5 627.5 L615 627.5 Z"/></clipPath>
<clipPath id="cdt"><path d="M702.6 145.0 C703.0 148.8 703.5 160.8 705.1 167.5 C706.7 174.2 709.6 179.4 712.0 185.0 C714.4 190.6 715.8 194.9 719.7 201.0 C723.6 207.1 730.7 216.1 735.4 221.3 C740.1 226.6 745.9 230.6 748.0 232.5 L748 145 Z"/></clipPath>
</defs>
<rect x="581.500" y="112.500" width="201" height="555" fill="#ffff80" stroke="#0a0a0a" stroke-width="1"/>
<rect x="609.500" y="138.500" width="145.500" height="493" fill="#fbfbfb"/>
<g clip-path="url(#cpanel)">

<g filter="url(#db1)" fill="none" stroke="#000" opacity=".62">
<rect x="609.500" y="138.500" width="145.500" height="493" stroke-width="5.500"/>
<path d="M666.0 137.0 C666.4 140.0 667.4 149.2 668.5 155.0 C669.6 160.8 671.2 166.7 672.9 172.0 C674.6 177.3 676.3 182.2 678.5 187.0 C680.7 191.8 682.8 195.2 686.2 200.5 C689.6 205.8 694.5 213.0 698.7 218.7 C702.9 224.3 706.8 228.7 711.2 234.4 C715.6 240.1 720.9 246.8 725.3 253.1 C729.7 259.3 734.1 266.2 737.8 271.9 C741.4 277.6 744.3 281.5 747.2 287.5 C750.1 293.5 753.7 304.6 755.0 308.0 M693.3 137.0 C693.8 141.9 694.9 158.7 696.6 166.5 C698.3 174.3 701.1 178.4 703.5 184.0 C705.9 189.6 707.3 193.9 711.2 200.0 C715.1 206.1 721.7 213.8 726.9 220.3 C732.1 226.8 737.7 233.5 742.5 239.0 C747.3 244.5 753.3 251.1 755.5 253.5 M608.5 247.2 C611.0 250.1 618.1 258.7 623.7 264.6 C629.3 270.6 634.4 276.2 642.0 282.9 C649.6 289.6 660.4 296.8 669.3 304.7 C678.2 312.6 688.6 323.2 695.6 330.0 C702.6 336.8 706.0 340.4 711.2 345.6 C716.4 350.8 721.7 355.5 726.9 361.2 C732.1 366.9 737.8 373.6 742.5 380.0 C747.2 386.4 752.9 396.2 755.0 399.5 M608.5 309.4 C613.2 312.9 627.9 323.8 636.5 330.3 C645.1 336.8 652.8 343.0 660.0 348.5 C667.2 354.0 674.1 358.9 680.0 363.4 C685.9 367.8 690.4 370.9 695.6 375.2 C700.8 379.5 706.0 384.2 711.2 389.4 C716.4 394.6 721.7 400.6 726.9 406.6 C732.1 412.6 737.8 419.4 742.5 425.3 C747.2 431.2 752.9 439.2 755.0 442.0 M608.5 446.4 C613.2 447.5 627.3 450.2 636.5 453.0 C645.7 455.8 655.5 459.8 663.8 463.0 C672.0 466.2 678.2 468.4 686.0 472.2 C693.8 475.9 702.9 480.7 710.7 485.5 C718.5 490.3 725.4 495.1 732.9 501.0 C740.4 506.9 751.7 517.7 755.5 521.0 M608.5 491.8 C614.5 493.7 632.8 499.4 644.3 503.2 C655.8 506.9 666.4 509.7 677.5 514.3 C688.6 518.8 701.5 525.7 710.7 530.5 C719.9 535.3 725.4 538.8 732.9 543.0 C740.4 547.2 751.7 553.8 755.5 556.0" stroke-width="7.500" transform="translate(-0.800 0.800)"/>
</g>

<g>
<path d="M615.0 500.9 C620.1 502.5 635.1 507.2 645.8 510.7 C656.5 514.2 667.9 517.2 679.0 521.8 C690.1 526.3 703.0 533.2 712.2 538.0 C721.4 542.8 728.5 547.2 734.4 550.5 C740.3 553.8 745.3 556.8 747.5 558.0 L747.5 627.5 L615 627.5 Z" fill="#fdfdfd" stroke="#fdfdfd" stroke-width="2.500" stroke-linejoin="round"/>
<path d="M615.0 500.9 C620.1 502.5 635.1 507.2 645.8 510.7 C656.5 514.2 667.9 517.2 679.0 521.8 C690.1 526.3 703.0 533.2 712.2 538.0 C721.4 542.8 728.5 547.2 734.4 550.5 C740.3 553.8 745.3 556.8 747.5 558.0 L747.5 627.5 L615 627.5 Z" fill="#545454"/>
<path d="M615.0 500.9 C620.1 502.5 635.1 507.2 645.8 510.7 C656.5 514.2 667.9 517.2 679.0 521.8 C690.1 526.3 703.0 533.2 712.2 538.0 C721.4 542.8 728.5 547.2 734.4 550.5 C740.3 553.8 745.3 556.8 747.5 558.0 L747.5 627.5 L615 627.5 Z" fill="#9a9a9a" filter="url(#noise)"/>
<g clip-path="url(#cdb)">
<g filter="url(#db2)" fill="#fafafa" stroke="none">

<path d="M616.500 505.500 C636 506 654 520 660 560 C640 556 622 545 617 525 Z"/>

<path d="M616 572 C630 556 650 560 667 574 C650 583 628 584 616 572 Z"/>

<path d="M673 572 C662 555 663 535 671 522 C679 535 680 548 673 572 Z"/>
<path d="M676 572 C686 556 689 540 680 526 C676 540 676 556 676 572 Z"/>

<path d="M672 570 C678 580 690 588 700 592 L694 578 C686 576 680 572 676 566 Z"/>

<path d="M697 547 C712 536 742 546 747 575 C749 600 728 608 712 602 C700 596 696 580 700 566 C690 560 690 552 697 547 Z"/>

<path d="M615 588 C640 584 665 590 690 602 C712 612 730 612 747.500 600 L747.500 622 C728 626 706 622 688 612 C664 600 640 598 615 602 Z"/>

<path d="M615 602 C630 598 655 603 665 612 C668 620 655 626 640 626 L615 626 Z"/>
<path d="M724 616 C734 614 742 608 746 600 L747.500 624 L735 625 Z"/>
</g>
<g filter="url(#db2)" fill="#5c5c5c" stroke="none">
<path d="M635 535 C645 538 655 547 659 558 C648 556 638 548 635 535 Z"/>
<path d="M637 571 C646 566 657 568 665 573 C656 577 645 577 637 571 Z"/>
<path d="M671.500 540 C674 548 674 560 672 568 C669 560 669 548 671.500 540 Z"/>
<path d="M628 612 C640 608 655 611 662 615 C650 618 638 619 628 612 Z"/>
<path d="M676 592 L694 604 L690 596 L680 588 Z"/>
</g>

<g fill="none" filter="url(#db2)">
<circle cx="721" cy="578" r="15.500" stroke="#5a5a5a" stroke-width="4.200"/>
<circle cx="721" cy="578" r="9" stroke="#5a5a5a" stroke-width="2.800"/>
<circle cx="721" cy="578" r="3.400" stroke="#5a5a5a" stroke-width="2"/>
<path d="M705 570 C700 580 702 592 712 600" stroke="#fafafa" stroke-width="3"/>
<path d="M735 603 C742 598 746 592 747 586" stroke="#5a5a5a" stroke-width="2.500"/>
</g>
</g>
</g>
<g>
<path d="M702.6 145.0 C703.0 148.8 703.5 160.8 705.1 167.5 C706.7 174.2 709.6 179.4 712.0 185.0 C714.4 190.6 715.8 194.9 719.7 201.0 C723.6 207.1 730.7 216.1 735.4 221.3 C740.1 226.6 745.9 230.6 748.0 232.5 L748 145 Z" fill="#fdfdfd" stroke="#fdfdfd" stroke-width="2.500" stroke-linejoin="round"/>
<path d="M702.6 145.0 C703.0 148.8 703.5 160.8 705.1 167.5 C706.7 174.2 709.6 179.4 712.0 185.0 C714.4 190.6 715.8 194.9 719.7 201.0 C723.6 207.1 730.7 216.1 735.4 221.3 C740.1 226.6 745.9 230.6 748.0 232.5 L748 145 Z" fill="#5e5e5e"/>
<path d="M702.6 145.0 C703.0 148.8 703.5 160.8 705.1 167.5 C706.7 174.2 709.6 179.4 712.0 185.0 C714.4 190.6 715.8 194.9 719.7 201.0 C723.6 207.1 730.7 216.1 735.4 221.3 C740.1 226.6 745.9 230.6 748.0 232.5 L748 145 Z" fill="#9a9a9a" filter="url(#noise)"/>
<g clip-path="url(#cdt)" filter="url(#db2)" fill="none" stroke="#fafafa" stroke-linecap="round">
<path d="M702.6 145.0 C703.0 148.8 703.5 160.8 705.1 167.5 C706.7 174.2 709.6 179.4 712.0 185.0 C714.4 190.6 715.8 194.9 719.7 201.0 C723.6 207.1 730.7 216.1 735.4 221.3 C740.1 226.6 745.9 230.6 748.0 232.5" stroke-width="12"/>
<path d="M703 149.200 H733" stroke-width="6"/>
<path d="M732.500 150 L726 172" stroke-width="5"/>
<path d="M717 160 L725.500 173" stroke-width="4"/>
<path d="M743 168 C731 178 734 190 740 202 C744 211 746 219 747 229" stroke-width="4.600"/>
<path d="M739.500 154 q2.500-3 4.500-.5" stroke-width="1.800"/>
<path d="M702.6 145.0 C703.0 148.8 703.5 160.8 705.1 167.5 C706.7 174.2 709.6 179.4 712.0 185.0 C714.4 190.6 715.8 194.9 719.7 201.0 C723.6 207.1 730.7 216.1 735.4 221.3 C740.1 226.6 745.9 230.6 748.0 232.5 L748 145 Z" stroke="#5c5c5c" stroke-width="2.400" stroke-linecap="butt"/>
</g>
</g>

<path d="M666.0 137.0 C666.4 140.0 667.4 149.2 668.5 155.0 C669.6 160.8 671.2 166.7 672.9 172.0 C674.6 177.3 676.3 182.2 678.5 187.0 C680.7 191.8 682.8 195.2 686.2 200.5 C689.6 205.8 694.5 213.0 698.7 218.7 C702.9 224.3 706.8 228.7 711.2 234.4 C715.6 240.1 720.9 246.8 725.3 253.1 C729.7 259.3 734.1 266.2 737.8 271.9 C741.4 277.6 744.3 281.5 747.2 287.5 C750.1 293.5 753.7 304.6 755.0 308.0 M693.3 137.0 C693.8 141.9 694.9 158.7 696.6 166.5 C698.3 174.3 701.1 178.4 703.5 184.0 C705.9 189.6 707.3 193.9 711.2 200.0 C715.1 206.1 721.7 213.8 726.9 220.3 C732.1 226.8 737.7 233.5 742.5 239.0 C747.3 244.5 753.3 251.1 755.5 253.5 M608.5 247.2 C611.0 250.1 618.1 258.7 623.7 264.6 C629.3 270.6 634.4 276.2 642.0 282.9 C649.6 289.6 660.4 296.8 669.3 304.7 C678.2 312.6 688.6 323.2 695.6 330.0 C702.6 336.8 706.0 340.4 711.2 345.6 C716.4 350.8 721.7 355.5 726.9 361.2 C732.1 366.9 737.8 373.6 742.5 380.0 C747.2 386.4 752.9 396.2 755.0 399.5 M608.5 309.4 C613.2 312.9 627.9 323.8 636.5 330.3 C645.1 336.8 652.8 343.0 660.0 348.5 C667.2 354.0 674.1 358.9 680.0 363.4 C685.9 367.8 690.4 370.9 695.6 375.2 C700.8 379.5 706.0 384.2 711.2 389.4 C716.4 394.6 721.7 400.6 726.9 406.6 C732.1 412.6 737.8 419.4 742.5 425.3 C747.2 431.2 752.9 439.2 755.0 442.0 M608.5 446.4 C613.2 447.5 627.3 450.2 636.5 453.0 C645.7 455.8 655.5 459.8 663.8 463.0 C672.0 466.2 678.2 468.4 686.0 472.2 C693.8 475.9 702.9 480.7 710.7 485.5 C718.5 490.3 725.4 495.1 732.9 501.0 C740.4 506.9 751.7 517.7 755.5 521.0 M608.5 491.8 C614.5 493.7 632.8 499.4 644.3 503.2 C655.8 506.9 666.4 509.7 677.5 514.3 C688.6 518.8 701.5 525.7 710.7 530.5 C719.9 535.3 725.4 538.8 732.9 543.0 C740.4 547.2 751.7 553.8 755.5 556.0" fill="none" stroke="#1c1c00" stroke-width="3.700"/>
<path d="M666.0 137.0 C666.4 140.0 667.4 149.2 668.5 155.0 C669.6 160.8 671.2 166.7 672.9 172.0 C674.6 177.3 676.3 182.2 678.5 187.0 C680.7 191.8 682.8 195.2 686.2 200.5 C689.6 205.8 694.5 213.0 698.7 218.7 C702.9 224.3 706.8 228.7 711.2 234.4 C715.6 240.1 720.9 246.8 725.3 253.1 C729.7 259.3 734.1 266.2 737.8 271.9 C741.4 277.6 744.3 281.5 747.2 287.5 C750.1 293.5 753.7 304.6 755.0 308.0 M693.3 137.0 C693.8 141.9 694.9 158.7 696.6 166.5 C698.3 174.3 701.1 178.4 703.5 184.0 C705.9 189.6 707.3 193.9 711.2 200.0 C715.1 206.1 721.7 213.8 726.9 220.3 C732.1 226.8 737.7 233.5 742.5 239.0 C747.3 244.5 753.3 251.1 755.5 253.5 M608.5 247.2 C611.0 250.1 618.1 258.7 623.7 264.6 C629.3 270.6 634.4 276.2 642.0 282.9 C649.6 289.6 660.4 296.8 669.3 304.7 C678.2 312.6 688.6 323.2 695.6 330.0 C702.6 336.8 706.0 340.4 711.2 345.6 C716.4 350.8 721.7 355.5 726.9 361.2 C732.1 366.9 737.8 373.6 742.5 380.0 C747.2 386.4 752.9 396.2 755.0 399.5 M608.5 309.4 C613.2 312.9 627.9 323.8 636.5 330.3 C645.1 336.8 652.8 343.0 660.0 348.5 C667.2 354.0 674.1 358.9 680.0 363.4 C685.9 367.8 690.4 370.9 695.6 375.2 C700.8 379.5 706.0 384.2 711.2 389.4 C716.4 394.6 721.7 400.6 726.9 406.6 C732.1 412.6 737.8 419.4 742.5 425.3 C747.2 431.2 752.9 439.2 755.0 442.0 M608.5 446.4 C613.2 447.5 627.3 450.2 636.5 453.0 C645.7 455.8 655.5 459.8 663.8 463.0 C672.0 466.2 678.2 468.4 686.0 472.2 C693.8 475.9 702.9 480.7 710.7 485.5 C718.5 490.3 725.4 495.1 732.9 501.0 C740.4 506.9 751.7 517.7 755.5 521.0 M608.5 491.8 C614.5 493.7 632.8 499.4 644.3 503.2 C655.8 506.9 666.4 509.7 677.5 514.3 C688.6 518.8 701.5 525.7 710.7 530.5 C719.9 535.3 725.4 538.8 732.9 543.0 C740.4 547.2 751.7 553.8 755.5 556.0" fill="none" stroke="#ffff6e" stroke-width="1.700"/>
</g>
<rect x="609.500" y="138.500" width="145.500" height="493" fill="none" stroke="#2a2a10" stroke-width="1.200"/>
</svg>

<div class="abs" style="left:1094px;top:44px;width:272px;height:677px;background:#f0f0f0"></div>
<div class="abs" style="left:1094px;top:44px;width:272px;height:1px;background:#f8f8f8"></div>
<div class="rh" style="top:45px"><span>Vectors</span><div class="rbtn"><svg class="abs" style="left:0;top:0" width="12" height="12" viewBox="0 0 12 12"><path d="M2.500 3 h7 l-3.500 6.500z" fill="#2c2c2c"/></svg></div></div>
<div class="rh" style="top:76px"><span>Bitmaps</span><div class="rbtn"><svg class="abs" style="left:0;top:0" width="12" height="12" viewBox="0 0 12 12"><path d="M6 2.500 l3.500 6.500 h-7z" fill="#2c2c2c"/></svg></div></div>
<div class="rh" style="top:157px"><span>Reliefs</span><div class="rbtn"><svg class="abs" style="left:0;top:0" width="12" height="12" viewBox="0 0 12 12"><path d="M6 2.500 l3.500 6.500 h-7z" fill="#2c2c2c"/></svg></div></div>
<div class="lrow" style="top:117px;height:24px"></div>
<div class="t" style="left:1128px;top:123px">Bitmap Layer 1</div>
<div class="abs" style="left:1103px;top:173px;width:239px;height:22px;background:#fff;border-top:2px solid #6e6e6e;border-left:2px solid #6e6e6e;border-right:1px solid #e4e4e4;border-bottom:1px solid #e4e4e4"></div>
<div class="t" style="left:1105px;top:176px">Front Relief</div>
<div class="abs" style="left:1325px;top:175px;width:17px;height:20px;background:#ececec;border-left:1px solid #fff;border-top:1px solid #fff;border-right:1px solid #6a6a6a;border-bottom:1px solid #6a6a6a"></div>
<svg class="abs" style="left:1329px;top:182px" width="9" height="6" viewBox="0 0 9 6"><path d="M1 1 h7.500 l-3.750 4z" fill="#050505"/></svg>
<div class="lrow" style="top:224px;height:26px"></div>
<div class="t" style="left:1149px;top:231px">Relief Layer 1</div>
<div class="abs" style="left:1365px;top:44px;width:1px;height:677px;background:#8e8e8e"></div>
<svg class="abs" style="left:1094px;top:90px" width="260" height="180" viewBox="1094 90 260 180">
<defs>
<linearGradient id="rdoc" x1="0" y1="0" x2="1" y2="1"><stop offset="0" stop-color="#c9d6e8"/><stop offset="1" stop-color="#7390b6"/></linearGradient>
<linearGradient id="rgray" x1="0" y1="0" x2="0" y2="1"><stop offset="0" stop-color="#9a9a9a"/><stop offset="1" stop-color="#e8e8e8"/></linearGradient>
<radialGradient id="rbulb" cx=".4" cy=".35" r=".7"><stop offset="0" stop-color="#fffbd0"/><stop offset=".6" stop-color="#ffe040"/><stop offset="1" stop-color="#e8a800"/></radialGradient>
<filter id="rb"><feGaussianBlur stdDeviation="0.500"/></filter>
<g id="r-new"><path d="M10 9 h4 l-2.500 5.500 h-6z" fill="#b8b8b8" filter="url(#rb)"/><path d="M0 0 h5.500 l5 5 v9.500 h-10.500z" fill="url(#rdoc)"/><path d="M5.500 0 v5 h5z" fill="#eef3fa"/></g>
<g id="r-fold"><path d="M9 10 h7 l-3 4 h-8z" fill="#bcbcbc" filter="url(#rb)"/><path d="M.5 6 q-.5-4.500 3-5 h5 l1.500 1.500 h3 q1 0 1 1.500 v2.500z" fill="#f0dc00"/><path d="M1 13.500 q-1-5.500 .5-6.500 q6-2 14-2 l-3.500 8 q-.5 1-1.500 1z" fill="#ffec10"/><path d="M1.500 13 q5-1.500 10-.5" stroke="#c9ae00" fill="none" stroke-width=".8"/></g>
<g id="r-save"><path d="M13 9 h4 l-2 5 h-4z" fill="#b8b8b8" filter="url(#rb)"/><path d="M0 1 q0-1 1-1 h12 q1 0 1 1 v12 q0 1-1 1 h-11.500 l-1.500-1.500z" fill="#1d50be"/><rect x="2.500" y=".5" width="9" height="6.500" fill="#dfe3e8"/><rect x="3.500" y="9.500" width="7.500" height="4.500" fill="#c9ced6"/><rect x="4.500" y="10.300" width="2" height="3.200" fill="#1d50be"/></g>
<g id="r-clone"><path d="M9 9 h7 l-2 6 h-7z" fill="#bababa" filter="url(#rb)"/><path d="M1 0 h8 v3 h3 v3 h2.500 v9 h-9 v-3 h-2.500 v-3 h-2z" fill="#cda878"/><path d="M1 0 v9 M0 1 h1.500 M0 3 h1.500 M0 5 h1.500 M0 7 h1.500" stroke="#a88858" stroke-width=".8"/><path d="M9 3 h-5 M12 6 h-5" stroke="#b89868" stroke-width=".6"/></g>
<g id="r-bucket"><path d="M0 3 h10.500 l-1.200 9.500 q-4 1.500-8 0z" fill="#4a82e0"/><ellipse cx="5.250" cy="3" rx="5.250" ry="2" fill="#9cc0f4" stroke="#3a6ac8" stroke-width=".7"/><path d="M2 3.800 q3 1.500 6.500 0" stroke="#fff" stroke-width=".7" fill="none"/></g>
<g id="r-bulb"><circle cx="5" cy="5" r="5" fill="url(#rbulb)"/><path d="M2.800 9 h4.400 l-.5 3.500 h-3.400z" fill="#f0c020"/><rect x="3" y="11.500" width="4" height="3" fill="#3a1c00"/></g>
</defs>

<use href="#r-new" x="1104.500" y="96"/>
<use href="#r-fold" x="1135" y="97"/>
<use href="#r-save" x="1166" y="97"/>
<use href="#r-clone" x="1198" y="96"/>
<path d="M1242 103 h4 l-2 6.500 h-4z" fill="#b4b4b4" filter="url(#rb)"/><rect x="1230" y="97" width="13" height="13" fill="url(#rgray)"/>

<path d="M1266 102 h9 l2 8.500 h-13z" fill="#8c90d8"/><rect x="1261" y="96.500" width="10.500" height="11.500" fill="#2a2010"/><rect x="1261" y="96.500" width="10.500" height="4" fill="#8a8040"/><path d="M1262.500 108 q0-4 2.500-5 l-.5-3 q0-2.500 2-2.500 q2 0 2 2.500 l-.5 3 q2.500 1 2.500 5z" fill="#120c04"/><ellipse cx="1266.500" cy="100.500" rx="1.400" ry="1.900" fill="#e8c080"/><path d="M1264.500 105.500 h4 v1.500 h-4z" fill="#d0a060"/>
<use href="#r-bucket" x="1295" y="97.500"/>

<path d="M1323.500 111.500 v-16 h16" stroke="#8a8a8a" fill="none"/><rect x="1324" y="96" width="16" height="16" fill="#f6f6f6"/>
<use href="#r-bulb" x="1324.500" y="98"/><use href="#r-bulb" x="1329.500" y="96.500"/>

<rect x="1106" y="120.500" width="16" height="16.500" fill="#3a2c10"/><rect x="1106" y="120.500" width="16" height="6" fill="#8a8248"/>
<path d="M1108 137 q0-6 3.500-7.500 l-1-4.500 q0-3.500 3.500-3.500 q3.500 0 3.500 3.500 l-1 4.500 q3.500 1.500 3.500 7.500z" fill="#140e04"/><ellipse cx="1114" cy="126" rx="2.100" ry="2.800" fill="#e8c080"/><path d="M1111 133 q3 2 6 0 l.5 3 h-7z" fill="#d8b060"/>

<use href="#r-new" x="1104" y="203.500"/>
<use href="#r-fold" x="1130" y="204"/>
<use href="#r-save" x="1158.500" y="204"/>
<use href="#r-clone" x="1186" y="203"/>

<path d="M1213 212.500 l8.500-4 l8.500 4 l-8.500 5z" fill="#9a1c10"/><path d="M1213 212.500 l8.500 5 v1.500 l-8.500-5z" fill="#701008"/><path d="M1221.500 217.500 l8.500-5 v1.500 l-8.500 5z" fill="#801208"/>
<path d="M1213.500 207 l8-4 l8 4 l-8 4.500z" fill="#8890e8" stroke="#6870c8" stroke-width=".5"/>
<path d="M1219.500 210.500 h4 v2 h2 l-4 3.500 l-4-3.500 h2z" fill="#f8c818"/>

<path d="M1243 203.500 h7 l4 3.500 v11.500 h-11z" fill="#a8b0bc"/><path d="M1250 203.500 v3.500 h4z" fill="#e0e4ea"/>
<use href="#r-bulb" x="1244" y="205" transform="translate(1249 212) scale(.85) translate(-1249 -212)"/>

<rect x="1270" y="204" width="14" height="13.700" fill="#050505"/><circle cx="1274" cy="206.500" r="1.400" fill="#bdbdbd"/><circle cx="1279.500" cy="206.500" r="1.400" fill="#bdbdbd"/><circle cx="1276.800" cy="208" r="2.500" fill="#d2d2d2"/><ellipse cx="1276.800" cy="213" rx="4.200" ry="3.900" fill="#c4c4c4"/><ellipse cx="1276.800" cy="213.500" rx="2.200" ry="2.200" fill="#8a8a8a"/><path d="M1281.500 206.500 h2 M1282.500 206.500 v2.500" stroke="#fff" stroke-width=".8"/>
<use href="#r-bucket" x="1299" y="204"/>
<path d="M1323.500 218.500 v-16 h16" stroke="#8a8a8a" fill="none"/><rect x="1324" y="203" width="16" height="16" fill="#f6f6f6"/>
<use href="#r-bulb" x="1324.500" y="205"/><use href="#r-bulb" x="1329.500" y="203.500"/>

<path d="M1113 236 q2-8 10-7.500 q7 1 8 9 l-4.500 2 q-1-6.500-6-6.500 q-4 0-5 5z" fill="#c8b060" stroke="#a08838" stroke-width=".6"/>
<path d="M1115.500 238 q1.500-4.500 5-4.500 q4.500 0 5.500 6.500 q-5 2.500-10.500-2z" fill="#8c8cd8"/>
<path d="M1112 243.500 h7 M1115.500 240 v7" stroke="#111" stroke-width="1.100"/>
<path d="M1139 234.500 v6.500 l4-3.200z" fill="#111"/>
<rect x="1323" y="228" width="17" height="17" fill="#e2e2e2"/><path d="M1323.500 245 v-16.500 h16.500" stroke="#9c9c9c" fill="none"/><path d="M1323.500 245.500 h17 v-17" stroke="#fbfbfb" fill="none"/>
<use href="#r-bulb" x="1326.500" y="230"/>

<rect x="1312" y="253" width="12" height="12" rx="1.500" fill="#123a94"/><rect x="1330" y="253" width="12" height="12" rx="1.500" fill="#123a94"/>
<path d="M1318 262.500 v-7 M1314.800 258.500 l3.200-3.200 l3.200 3.200" stroke="#fff" stroke-width="1.600" fill="none"/>
<path d="M1336 255.500 v7 M1332.800 259.500 l3.200 3.200 l3.200-3.200" stroke="#fff" stroke-width="1.600" fill="none"/>
</svg>


<div class="abs" style="left:0;top:748px;width:1366px;height:20px;background:#f0f0f0"></div>
<div class="abs" style="left:1023px;top:752px;width:66px;height:17px;border-left:1px solid #a2a2a2;border-top:1px solid #a2a2a2;border-right:1px solid #fdfdfd;background:#f0f0f0"></div>
<div class="abs" style="left:1092px;top:752px;width:66px;height:17px;border-left:1px solid #a2a2a2;border-top:1px solid #a2a2a2;border-right:1px solid #fdfdfd;background:#f0f0f0"></div>
<div class="abs" style="left:1160px;top:752px;width:62px;height:17px;border-left:1px solid #a2a2a2;border-top:1px solid #a2a2a2;border-right:1px solid #fdfdfd;background:#f0f0f0"></div>
<div class="abs" style="left:1224px;top:752px;width:70px;height:17px;border-left:1px solid #a2a2a2;border-top:1px solid #a2a2a2;border-right:1px solid #fdfdfd;background:#f0f0f0"></div>
<div class="abs" style="left:1297px;top:752px;width:69px;height:17px;border-left:1px solid #a2a2a2;border-top:1px solid #a2a2a2;border-right:1px solid #fdfdfd;background:#f0f0f0"></div>
<div class="t" style="left:1025px;top:753px;font-size:11.5px;letter-spacing:-0.45px">X: 1391.521</div>
<div class="t" style="left:1094px;top:753px;font-size:11.5px;letter-spacing:-0.45px">Y: -51.874</div>

<div class="abs" id="menugrad"></div>
<div class="abs" id="titlebar"></div>
<div class="abs" id="menubar"></div>
<div class="abs" id="topblack"></div>
<div class="t" style="left:23px;top:5px;font-size:11.7px;color:#111">ArtCAM Pro - Door_2176.art - [2D View:0 - Bitmap Layer 1]</div>
<svg class="abs" style="left:3px;top:3px" width="16" height="17" viewBox="0 0 16 17"><path d="M3 2.5c0-1.5 4-1.5 4 0v6H3z" fill="#3d8fd6"/><rect x="3.6" y="3" width="2.6" height="2.6" fill="#9fd0f5"/><rect x="2" y="8.5" width="6.5" height="4" fill="#2f6fb8"/><rect x="0.5" y="12.5" width="8.5" height="1.6" fill="#5aa0e0"/><rect x="1.5" y="14.1" width="7" height="1.6" fill="#2c62a8"/><rect x="0" y="9.6" width="3" height="1.2" fill="#5e8fc8"/><path d="M11.6 0.3 L8 16h2.3l.9-4.2h2l.5 4.2h2.2L13.4 0.3z M11.5 9.8l.6-4.6.6 4.6z" fill="#7a1f9c" fill-rule="evenodd"/><path d="M12.6 0.3 L15.9 16h-1.4L12 2.5z" fill="#4a148c"/></svg><svg class="abs" style="left:7px;top:24px" width="16" height="17" viewBox="0 0 16 17"><path d="M3 2.5c0-1.5 4-1.5 4 0v6H3z" fill="#3d8fd6"/><rect x="3.6" y="3" width="2.6" height="2.6" fill="#9fd0f5"/><rect x="2" y="8.5" width="6.5" height="4" fill="#2f6fb8"/><rect x="0.5" y="12.5" width="8.5" height="1.6" fill="#5aa0e0"/><rect x="1.5" y="14.1" width="7" height="1.6" fill="#2c62a8"/><rect x="0" y="9.6" width="3" height="1.2" fill="#5e8fc8"/><path d="M11.6 0.3 L8 16h2.3l.9-4.2h2l.5 4.2h2.2L13.4 0.3z M11.5 9.8l.6-4.6.6 4.6z" fill="#7a1f9c" fill-rule="evenodd"/><path d="M12.6 0.3 L15.9 16h-1.4L12 2.5z" fill="#4a148c"/></svg><div class="mi" style="left:30.4px;letter-spacing:-0.43px">File</div>
<div class="mi" style="left:62.4px;letter-spacing:-0.27px">Edit</div>
<div class="mi" style="left:96.7px;letter-spacing:0.06px">Model</div>
<div class="mi" style="left:144.5px;letter-spacing:-0.37px">Vectors</div>
<div class="mi" style="left:196.5px;letter-spacing:-0.12px">Bitmaps</div>
<div class="mi" style="left:253.7px;letter-spacing:-0.47px">Reliefs</div>
<div class="mi" style="left:301.9px;letter-spacing:-0.09px">Toolpaths</div>
<div class="mi" style="left:367.4px;letter-spacing:0.12px">Window</div>
<div class="mi" style="left:426px;letter-spacing:-0.29px">Help</div>


<svg class="abs" style="left:1240px;top:2px" width="126" height="42" viewBox="1240 2 126 42" shape-rendering="crispEdges">
<rect x="1245" y="10" width="10" height="1" fill="#111"/>
<rect x="1292.5" y="5.5" width="7" height="7" fill="none" stroke="#111" stroke-width="1"/>
<rect x="1290.5" y="7.5" width="7" height="7" fill="#fff" stroke="#111" stroke-width="1"/>
<g shape-rendering="auto"><path d="M1336 5 L1346 15 M1346 5 L1336 15" stroke="#111" stroke-width="1.1" fill="none"/></g>
<rect x="1309.5" y="24.5" width="17" height="17" fill="#fff" stroke="#ececec"/>
<rect x="1328.5" y="24.5" width="17" height="17" fill="#fff" stroke="#ececec"/>
<rect x="1347.5" y="24.5" width="17" height="17" fill="#fff" stroke="#ececec"/>
<rect x="1314" y="35" width="6" height="2" fill="#7a7a7a"/>
<rect x="1335.500" y="29.5" width="5" height="4" fill="none" stroke="#7a7a7a"/><rect x="1335" y="29" width="6" height="2" fill="#7a7a7a"/>
<rect x="1333.500" y="32.5" width="5" height="4" fill="#fff" stroke="#7a7a7a"/><rect x="1333" y="32" width="6" height="2" fill="#7a7a7a"/>
<g shape-rendering="auto"><path d="M1353.500 30.500 L1359.500 36.500 M1359.500 30.500 L1353.500 36.500" stroke="#7a7a7a" stroke-width="2" fill="none"/></g>
</svg>
</div>
</body>
</html>
